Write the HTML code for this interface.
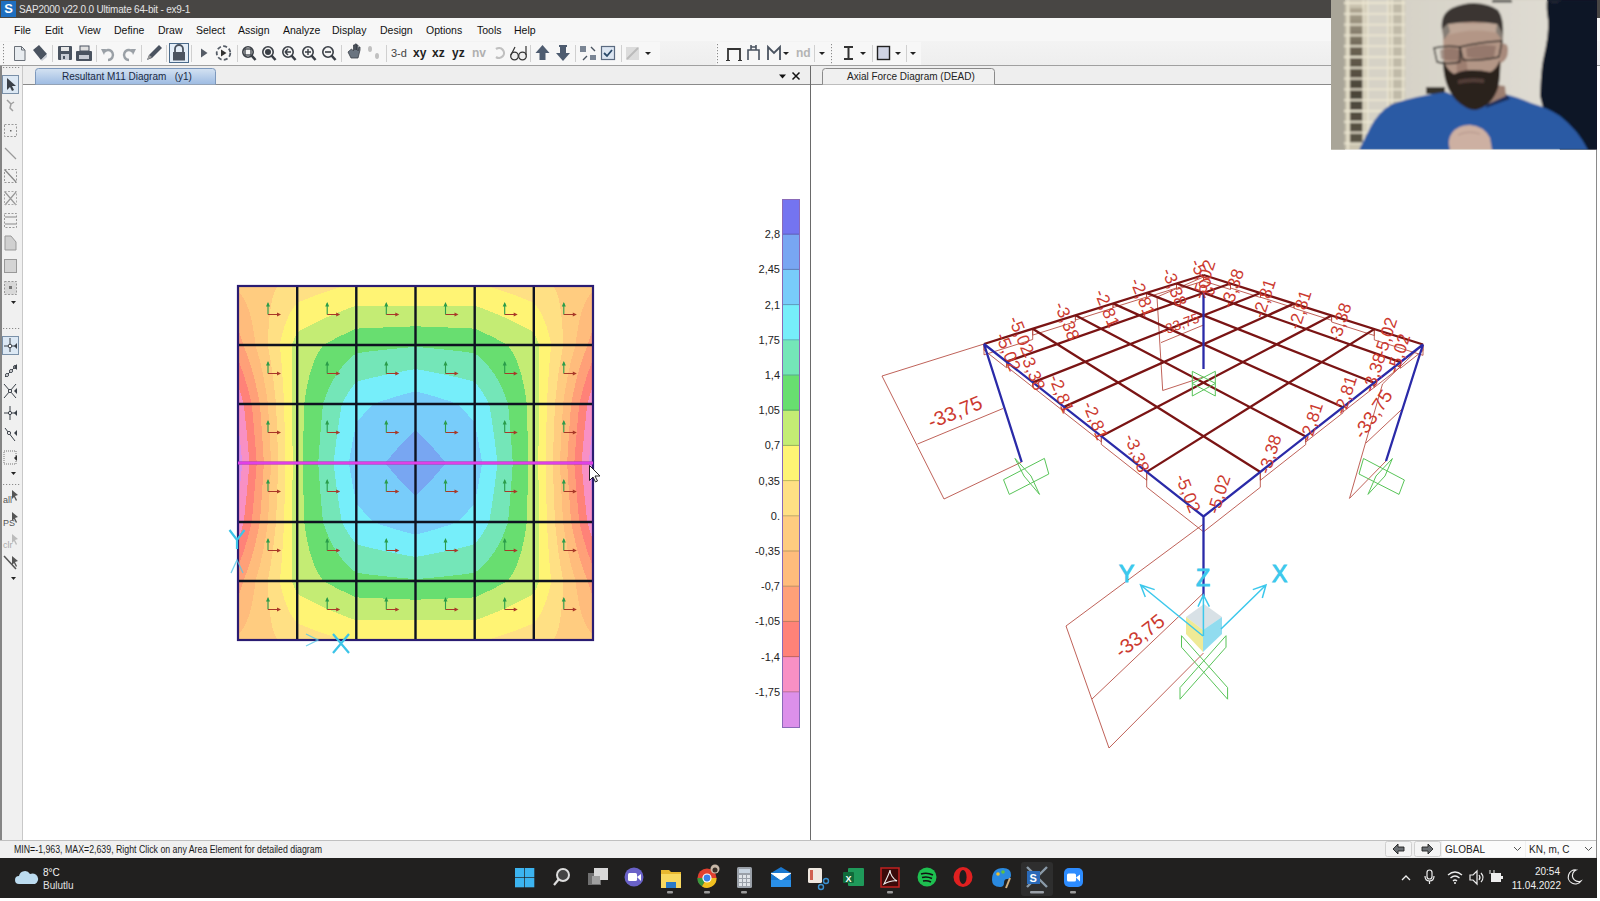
<!DOCTYPE html>
<html><head><meta charset="utf-8">
<style>
*{margin:0;padding:0;box-sizing:border-box}
html,body{width:1600px;height:901px;overflow:hidden;background:#fff;font-family:"Liberation Sans", sans-serif}
.a{position:absolute}
#title{left:0;top:0;width:1600px;height:18px;background:#484644;color:#e8e8e8}
#menu{left:0;top:18px;width:1600px;height:23px;background:#f7f7f7;font-size:10.5px;color:#111}
#menu span{position:absolute;top:6px}
#tbar{left:0;top:41px;width:1600px;height:25px;background:linear-gradient(#f3f3f3,#eeeeee);border-bottom:1px solid #a0a0a0}
#tabs{left:22px;top:66px;width:1575px;height:19px;background:#eeeeee;border-bottom:1px solid #8a8a8a}
#ltool{left:0;top:66px;width:23px;height:774px;background:#f0f0f0;border-left:2px solid #858585;border-right:1px solid #c8c8c8}
#divider{left:810px;top:66px;width:1px;height:774px;background:#6a6a6a}
#redge{left:1596px;top:66px;width:1px;height:792px;background:#8a8a8a}
#status{left:0;top:840px;width:1597px;height:18px;background:#f0f0f0;border-top:1px solid #c0c0c0;font-size:10px;color:#222}
#task{left:0;top:858px;width:1597px;height:39.5px;background:#21201f;color:#eee}
svg text{font-family:"Liberation Sans", sans-serif}
</style></head><body>
<div id="title" class="a">
  <div class="a" style="left:1px;top:1px;width:15px;height:16px;background:#1f6fc0;color:#fff;font-weight:bold;font-size:13px;text-align:center;line-height:16px">S</div>
  <div class="a" style="left:19px;top:4px;font-size:10px;letter-spacing:-0.2px;color:#e4e4e4">SAP2000 v22.0.0 Ultimate 64-bit - ex9-1</div>
</div>
<div id="menu" class="a">
  <span style="left:14px">File</span><span style="left:45px">Edit</span><span style="left:78px">View</span><span style="left:114px">Define</span><span style="left:158px">Draw</span><span style="left:196px">Select</span><span style="left:238px">Assign</span><span style="left:283px">Analyze</span><span style="left:332px">Display</span><span style="left:380px">Design</span><span style="left:426px">Options</span><span style="left:477px">Tools</span><span style="left:514px">Help</span>
</div>
<div id="tbar" class="a"></div>
<div id="tabs" class="a"></div>
<div id="ltool" class="a"></div>
<div id="divider" class="a"></div>
<div id="redge" class="a"></div>
<div id="status" class="a"></div>
<div id="task" class="a"></div>
<svg class="a" style="left:0;top:0" width="1600" height="901" viewBox="0 0 1600 901">
<g fill="none" shape-rendering="crispEdges"><path stroke="#dc90ea" stroke-width="1" d="M238 427.5h1M592 427.5h1M238 428.5h1M592 428.5h1M238 429.5h1M592 429.5h1M238 430.5h1M592 430.5h1M238 431.5h1M592 431.5h1M238 432.5h1M592 432.5h1M238 433.5h1M592 433.5h1M238 434.5h1M592 434.5h1M238 435.5h1M592 435.5h1M238 436.5h2M591 436.5h2M238 437.5h2M591 437.5h2M238 438.5h2M591 438.5h2M238 439.5h2M591 439.5h2M238 440.5h2M591 440.5h2M238 441.5h2M591 441.5h2M238 442.5h2M591 442.5h2M238 443.5h2M591 443.5h2M238 444.5h2M591 444.5h2M238 445.5h3M590 445.5h3M238 446.5h3M590 446.5h3M238 447.5h3M590 447.5h3M238 448.5h3M590 448.5h3M238 449.5h3M590 449.5h3M238 450.5h3M590 450.5h3M238 451.5h3M590 451.5h3M238 452.5h3M590 452.5h3M238 453.5h3M590 453.5h3M238 454.5h3M590 454.5h3M238 455.5h4M589 455.5h4M238 456.5h4M589 456.5h4M238 457.5h4M589 457.5h4M238 458.5h4M589 458.5h4M238 459.5h4M589 459.5h4M238 460.5h4M589 460.5h4M238 461.5h4M589 461.5h4M238 462.5h4M589 462.5h4M238 463.5h4M589 463.5h4M238 464.5h4M589 464.5h4M238 465.5h4M589 465.5h4M238 466.5h4M589 466.5h4M238 467.5h4M589 467.5h4M238 468.5h4M589 468.5h4M238 469.5h4M589 469.5h4M238 470.5h4M589 470.5h4M238 471.5h3M590 471.5h3M238 472.5h3M590 472.5h3M238 473.5h3M590 473.5h3M238 474.5h3M590 474.5h3M238 475.5h3M590 475.5h3M238 476.5h3M590 476.5h3M238 477.5h3M590 477.5h3M238 478.5h3M590 478.5h3M238 479.5h3M590 479.5h3M238 480.5h3M590 480.5h3M238 481.5h2M591 481.5h2M238 482.5h2M591 482.5h2M238 483.5h2M591 483.5h2M238 484.5h2M591 484.5h2M238 485.5h2M591 485.5h2M238 486.5h2M591 486.5h2M238 487.5h2M591 487.5h2M238 488.5h2M591 488.5h2M238 489.5h2M591 489.5h2M238 490.5h1M592 490.5h1M238 491.5h1M592 491.5h1M238 492.5h1M592 492.5h1M238 493.5h1M592 493.5h1M238 494.5h1M592 494.5h1M238 495.5h1M592 495.5h1M238 496.5h1M592 496.5h1M238 497.5h1M592 497.5h1M238 498.5h1M592 498.5h1"/><path stroke="#f890c4" stroke-width="1" d="M238 387.5h1M592 387.5h1M238 388.5h1M592 388.5h1M238 389.5h1M592 389.5h1M238 390.5h2M591 390.5h2M238 391.5h2M591 391.5h2M238 392.5h2M591 392.5h2M238 393.5h3M590 393.5h3M238 394.5h3M590 394.5h3M238 395.5h3M590 395.5h3M238 396.5h4M589 396.5h4M238 397.5h4M589 397.5h4M238 398.5h4M589 398.5h4M238 399.5h4M589 399.5h4M238 400.5h5M588 400.5h5M238 401.5h5M588 401.5h5M238 402.5h5M588 402.5h5M238 403.5h6M587 403.5h6M238 404.5h6M587 404.5h6M238 405.5h6M587 405.5h6M238 406.5h6M587 406.5h6M238 407.5h6M587 407.5h6M238 408.5h6M587 408.5h6M238 409.5h6M587 409.5h6M238 410.5h6M587 410.5h6M238 411.5h7M586 411.5h7M238 412.5h7M586 412.5h7M238 413.5h7M586 413.5h7M238 414.5h7M586 414.5h7M238 415.5h7M586 415.5h7M238 416.5h7M586 416.5h7M238 417.5h7M586 417.5h7M238 418.5h7M586 418.5h7M238 419.5h7M586 419.5h7M238 420.5h7M586 420.5h7M238 421.5h8M585 421.5h8M238 422.5h8M585 422.5h8M238 423.5h8M585 423.5h8M238 424.5h8M585 424.5h8M238 425.5h8M585 425.5h8M238 426.5h8M585 426.5h8M239 427.5h7M585 427.5h7M239 428.5h7M585 428.5h7M239 429.5h7M585 429.5h7M239 430.5h8M584 430.5h8M239 431.5h8M584 431.5h8M239 432.5h8M584 432.5h8M239 433.5h8M584 433.5h8M239 434.5h8M584 434.5h8M239 435.5h8M584 435.5h8M240 436.5h7M584 436.5h7M240 437.5h7M584 437.5h7M240 438.5h7M584 438.5h7M240 439.5h7M584 439.5h7M240 440.5h7M584 440.5h7M240 441.5h8M583 441.5h8M240 442.5h8M583 442.5h8M240 443.5h8M583 443.5h8M240 444.5h8M583 444.5h8M241 445.5h7M583 445.5h7M241 446.5h7M583 446.5h7M241 447.5h7M583 447.5h7M241 448.5h7M583 448.5h7M241 449.5h7M583 449.5h7M241 450.5h7M583 450.5h7M241 451.5h7M583 451.5h7M241 452.5h8M582 452.5h8M241 453.5h8M582 453.5h8M241 454.5h8M582 454.5h8M242 455.5h7M582 455.5h7M242 456.5h7M582 456.5h7M242 457.5h7M582 457.5h7M242 458.5h7M582 458.5h7M242 459.5h7M582 459.5h7M242 460.5h7M582 460.5h7M242 461.5h7M582 461.5h7M242 462.5h7M582 462.5h7M242 463.5h7M582 463.5h7M242 464.5h7M582 464.5h7M242 465.5h7M582 465.5h7M242 466.5h7M582 466.5h7M242 467.5h7M582 467.5h7M242 468.5h7M582 468.5h7M242 469.5h7M582 469.5h7M242 470.5h7M582 470.5h7M241 471.5h8M582 471.5h8M241 472.5h8M582 472.5h8M241 473.5h8M582 473.5h8M241 474.5h7M583 474.5h7M241 475.5h7M583 475.5h7M241 476.5h7M583 476.5h7M241 477.5h7M583 477.5h7M241 478.5h7M583 478.5h7M241 479.5h7M583 479.5h7M241 480.5h7M583 480.5h7M240 481.5h8M583 481.5h8M240 482.5h8M583 482.5h8M240 483.5h8M583 483.5h8M240 484.5h8M583 484.5h8M240 485.5h7M584 485.5h7M240 486.5h7M584 486.5h7M240 487.5h7M584 487.5h7M240 488.5h7M584 488.5h7M240 489.5h7M584 489.5h7M239 490.5h8M584 490.5h8M239 491.5h8M584 491.5h8M239 492.5h8M584 492.5h8M239 493.5h8M584 493.5h8M239 494.5h8M584 494.5h8M239 495.5h8M584 495.5h8M239 496.5h7M585 496.5h7M239 497.5h7M585 497.5h7M239 498.5h7M585 498.5h7M238 499.5h8M585 499.5h8M238 500.5h8M585 500.5h8M238 501.5h8M585 501.5h8M238 502.5h8M585 502.5h8M238 503.5h8M585 503.5h8M238 504.5h8M585 504.5h8M238 505.5h7M586 505.5h7M238 506.5h7M586 506.5h7M238 507.5h7M586 507.5h7M238 508.5h7M586 508.5h7M238 509.5h7M586 509.5h7M238 510.5h7M586 510.5h7M238 511.5h7M586 511.5h7M238 512.5h7M586 512.5h7M238 513.5h7M586 513.5h7M238 514.5h7M586 514.5h7M238 515.5h6M587 515.5h6M238 516.5h6M587 516.5h6M238 517.5h6M587 517.5h6M238 518.5h6M587 518.5h6M238 519.5h6M587 519.5h6M238 520.5h6M587 520.5h6M238 521.5h6M587 521.5h6M238 522.5h6M587 522.5h6M238 523.5h5M588 523.5h5M238 524.5h5M588 524.5h5M238 525.5h5M588 525.5h5M238 526.5h4M589 526.5h4M238 527.5h4M589 527.5h4M238 528.5h4M589 528.5h4M238 529.5h4M589 529.5h4M238 530.5h3M590 530.5h3M238 531.5h3M590 531.5h3M238 532.5h3M590 532.5h3M238 533.5h2M591 533.5h2M238 534.5h2M591 534.5h2M238 535.5h2M591 535.5h2M238 536.5h1M592 536.5h1M238 537.5h1M592 537.5h1M238 538.5h1M592 538.5h1"/><path stroke="#ff8278" stroke-width="1" d="M238 361.5h1M592 361.5h1M238 362.5h1M592 362.5h1M238 363.5h2M591 363.5h2M238 364.5h2M591 364.5h2M238 365.5h2M591 365.5h2M238 366.5h3M590 366.5h3M238 367.5h3M590 367.5h3M238 368.5h3M590 368.5h3M238 369.5h4M589 369.5h4M238 370.5h4M589 370.5h4M238 371.5h5M588 371.5h5M238 372.5h5M588 372.5h5M238 373.5h5M588 373.5h5M238 374.5h6M587 374.5h6M238 375.5h6M587 375.5h6M238 376.5h6M587 376.5h6M238 377.5h7M586 377.5h7M238 378.5h7M586 378.5h7M238 379.5h7M586 379.5h7M238 380.5h7M586 380.5h7M238 381.5h8M585 381.5h8M238 382.5h8M585 382.5h8M238 383.5h8M585 383.5h8M238 384.5h9M584 384.5h9M238 385.5h9M584 385.5h9M238 386.5h9M584 386.5h9M239 387.5h9M583 387.5h9M239 388.5h9M583 388.5h9M239 389.5h9M583 389.5h9M240 390.5h8M583 390.5h8M240 391.5h9M582 391.5h9M240 392.5h9M582 392.5h9M241 393.5h8M582 393.5h8M241 394.5h8M582 394.5h8M241 395.5h9M581 395.5h9M242 396.5h8M581 396.5h8M242 397.5h8M581 397.5h8M242 398.5h8M581 398.5h8M242 399.5h9M580 399.5h9M243 400.5h8M580 400.5h8M243 401.5h8M580 401.5h8M243 402.5h8M580 402.5h8M244 403.5h8M579 403.5h8M244 404.5h8M579 404.5h8M244 405.5h8M579 405.5h8M244 406.5h8M579 406.5h8M244 407.5h8M579 407.5h8M244 408.5h8M579 408.5h8M244 409.5h8M579 409.5h8M244 410.5h8M579 410.5h8M245 411.5h7M579 411.5h7M245 412.5h8M578 412.5h8M245 413.5h8M578 413.5h8M245 414.5h8M578 414.5h8M245 415.5h8M578 415.5h8M245 416.5h8M578 416.5h8M245 417.5h8M578 417.5h8M245 418.5h8M578 418.5h8M245 419.5h8M578 419.5h8M245 420.5h8M578 420.5h8M246 421.5h7M578 421.5h7M246 422.5h7M578 422.5h7M246 423.5h8M577 423.5h8M246 424.5h8M577 424.5h8M246 425.5h8M577 425.5h8M246 426.5h8M577 426.5h8M246 427.5h8M577 427.5h8M246 428.5h8M577 428.5h8M246 429.5h8M577 429.5h8M247 430.5h7M577 430.5h7M247 431.5h7M577 431.5h7M247 432.5h7M577 432.5h7M247 433.5h7M577 433.5h7M247 434.5h7M577 434.5h7M247 435.5h8M576 435.5h8M247 436.5h8M576 436.5h8M247 437.5h8M576 437.5h8M247 438.5h8M576 438.5h8M247 439.5h8M576 439.5h8M247 440.5h8M576 440.5h8M248 441.5h7M576 441.5h7M248 442.5h7M576 442.5h7M248 443.5h7M576 443.5h7M248 444.5h7M576 444.5h7M248 445.5h7M576 445.5h7M248 446.5h7M576 446.5h7M248 447.5h8M575 447.5h8M248 448.5h8M575 448.5h8M248 449.5h8M575 449.5h8M248 450.5h8M575 450.5h8M248 451.5h8M575 451.5h8M249 452.5h7M575 452.5h7M249 453.5h7M575 453.5h7M249 454.5h7M575 454.5h7M249 455.5h7M575 455.5h7M249 456.5h7M575 456.5h7M249 457.5h7M575 457.5h7M249 458.5h7M575 458.5h7M249 459.5h7M575 459.5h7M249 460.5h8M574 460.5h8M249 461.5h8M574 461.5h8M249 462.5h8M574 462.5h8M249 463.5h8M574 463.5h8M249 464.5h8M574 464.5h8M249 465.5h8M574 465.5h8M249 466.5h7M575 466.5h7M249 467.5h7M575 467.5h7M249 468.5h7M575 468.5h7M249 469.5h7M575 469.5h7M249 470.5h7M575 470.5h7M249 471.5h7M575 471.5h7M249 472.5h7M575 472.5h7M249 473.5h7M575 473.5h7M248 474.5h8M575 474.5h8M248 475.5h8M575 475.5h8M248 476.5h8M575 476.5h8M248 477.5h8M575 477.5h8M248 478.5h8M575 478.5h8M248 479.5h7M576 479.5h7M248 480.5h7M576 480.5h7M248 481.5h7M576 481.5h7M248 482.5h7M576 482.5h7M248 483.5h7M576 483.5h7M248 484.5h7M576 484.5h7M247 485.5h8M576 485.5h8M247 486.5h8M576 486.5h8M247 487.5h8M576 487.5h8M247 488.5h8M576 488.5h8M247 489.5h8M576 489.5h8M247 490.5h8M576 490.5h8M247 491.5h7M577 491.5h7M247 492.5h7M577 492.5h7M247 493.5h7M577 493.5h7M247 494.5h7M577 494.5h7M247 495.5h7M577 495.5h7M246 496.5h8M577 496.5h8M246 497.5h8M577 497.5h8M246 498.5h8M577 498.5h8M246 499.5h8M577 499.5h8M246 500.5h8M577 500.5h8M246 501.5h8M577 501.5h8M246 502.5h8M577 502.5h8M246 503.5h7M578 503.5h7M246 504.5h7M578 504.5h7M245 505.5h8M578 505.5h8M245 506.5h8M578 506.5h8M245 507.5h8M578 507.5h8M245 508.5h8M578 508.5h8M245 509.5h8M578 509.5h8M245 510.5h8M578 510.5h8M245 511.5h8M578 511.5h8M245 512.5h8M578 512.5h8M245 513.5h8M578 513.5h8M245 514.5h7M579 514.5h7M244 515.5h8M579 515.5h8M244 516.5h8M579 516.5h8M244 517.5h8M579 517.5h8M244 518.5h8M579 518.5h8M244 519.5h8M579 519.5h8M244 520.5h8M579 520.5h8M244 521.5h8M579 521.5h8M244 522.5h8M579 522.5h8M243 523.5h8M580 523.5h8M243 524.5h8M580 524.5h8M243 525.5h8M580 525.5h8M242 526.5h9M580 526.5h9M242 527.5h8M581 527.5h8M242 528.5h8M581 528.5h8M242 529.5h8M581 529.5h8M241 530.5h9M581 530.5h9M241 531.5h8M582 531.5h8M241 532.5h8M582 532.5h8M240 533.5h9M582 533.5h9M240 534.5h9M582 534.5h9M240 535.5h8M583 535.5h8M239 536.5h9M583 536.5h9M239 537.5h9M583 537.5h9M239 538.5h9M583 538.5h9M238 539.5h9M584 539.5h9M238 540.5h9M584 540.5h9M238 541.5h9M584 541.5h9M238 542.5h8M585 542.5h8M238 543.5h8M585 543.5h8M238 544.5h8M585 544.5h8M238 545.5h7M586 545.5h7M238 546.5h7M586 546.5h7M238 547.5h7M586 547.5h7M238 548.5h7M586 548.5h7M238 549.5h6M587 549.5h6M238 550.5h6M587 550.5h6M238 551.5h6M587 551.5h6M238 552.5h5M588 552.5h5M238 553.5h5M588 553.5h5M238 554.5h5M588 554.5h5M238 555.5h4M589 555.5h4M238 556.5h4M589 556.5h4M238 557.5h3M590 557.5h3M238 558.5h3M590 558.5h3M238 559.5h3M590 559.5h3M238 560.5h2M591 560.5h2M238 561.5h2M591 561.5h2M238 562.5h2M591 562.5h2M238 563.5h1M592 563.5h1M238 564.5h1M592 564.5h1"/><path stroke="#ffa078" stroke-width="1" d="M238 330.5h1M592 330.5h1M238 331.5h1M592 331.5h1M238 332.5h1M592 332.5h1M238 333.5h2M591 333.5h2M238 334.5h2M591 334.5h2M238 335.5h2M591 335.5h2M238 336.5h3M590 336.5h3M238 337.5h3M590 337.5h3M238 338.5h3M590 338.5h3M238 339.5h4M589 339.5h4M238 340.5h4M589 340.5h4M238 341.5h4M589 341.5h4M238 342.5h5M588 342.5h5M238 343.5h5M588 343.5h5M238 344.5h5M588 344.5h5M238 345.5h5M588 345.5h5M238 346.5h6M587 346.5h6M238 347.5h6M587 347.5h6M238 348.5h7M586 348.5h7M238 349.5h7M586 349.5h7M238 350.5h7M586 350.5h7M238 351.5h8M585 351.5h8M238 352.5h8M585 352.5h8M238 353.5h9M584 353.5h9M238 354.5h9M584 354.5h9M238 355.5h9M584 355.5h9M238 356.5h10M583 356.5h10M238 357.5h10M583 357.5h10M238 358.5h10M583 358.5h10M238 359.5h11M582 359.5h11M238 360.5h11M582 360.5h11M239 361.5h10M582 361.5h10M239 362.5h11M581 362.5h11M240 363.5h10M581 363.5h10M240 364.5h10M581 364.5h10M240 365.5h11M580 365.5h11M241 366.5h10M580 366.5h10M241 367.5h10M580 367.5h10M241 368.5h11M579 368.5h11M242 369.5h10M579 369.5h10M242 370.5h10M579 370.5h10M243 371.5h9M579 371.5h9M243 372.5h10M578 372.5h10M243 373.5h10M578 373.5h10M244 374.5h9M578 374.5h9M244 375.5h10M577 375.5h10M244 376.5h10M577 376.5h10M245 377.5h9M577 377.5h9M245 378.5h9M577 378.5h9M245 379.5h10M576 379.5h10M245 380.5h10M576 380.5h10M246 381.5h9M576 381.5h9M246 382.5h9M576 382.5h9M246 383.5h10M575 383.5h10M247 384.5h9M575 384.5h9M247 385.5h9M575 385.5h9M247 386.5h9M575 386.5h9M248 387.5h8M575 387.5h8M248 388.5h9M574 388.5h9M248 389.5h9M574 389.5h9M248 390.5h9M574 390.5h9M249 391.5h8M574 391.5h8M249 392.5h9M573 392.5h9M249 393.5h9M573 393.5h9M249 394.5h9M573 394.5h9M250 395.5h8M573 395.5h8M250 396.5h8M573 396.5h8M250 397.5h9M572 397.5h9M250 398.5h9M572 398.5h9M251 399.5h8M572 399.5h8M251 400.5h8M572 400.5h8M251 401.5h8M572 401.5h8M251 402.5h9M571 402.5h9M252 403.5h8M571 403.5h8M252 404.5h8M571 404.5h8M252 405.5h8M571 405.5h8M252 406.5h8M571 406.5h8M252 407.5h8M571 407.5h8M252 408.5h8M571 408.5h8M252 409.5h8M571 409.5h8M252 410.5h8M571 410.5h8M252 411.5h8M571 411.5h8M253 412.5h8M570 412.5h8M253 413.5h8M570 413.5h8M253 414.5h8M570 414.5h8M253 415.5h8M570 415.5h8M253 416.5h8M570 416.5h8M253 417.5h8M570 417.5h8M253 418.5h8M570 418.5h8M253 419.5h8M570 419.5h8M253 420.5h8M570 420.5h8M253 421.5h8M570 421.5h8M253 422.5h8M570 422.5h8M254 423.5h7M570 423.5h7M254 424.5h7M570 424.5h7M254 425.5h7M570 425.5h7M254 426.5h8M569 426.5h8M254 427.5h8M569 427.5h8M254 428.5h8M569 428.5h8M254 429.5h8M569 429.5h8M254 430.5h8M569 430.5h8M254 431.5h8M569 431.5h8M254 432.5h8M569 432.5h8M254 433.5h8M569 433.5h8M254 434.5h8M569 434.5h8M255 435.5h7M569 435.5h7M255 436.5h7M569 436.5h7M255 437.5h7M569 437.5h7M255 438.5h7M569 438.5h7M255 439.5h7M569 439.5h7M255 440.5h7M569 440.5h7M255 441.5h8M568 441.5h8M255 442.5h8M568 442.5h8M255 443.5h8M568 443.5h8M255 444.5h8M568 444.5h8M255 445.5h8M568 445.5h8M255 446.5h8M568 446.5h8M256 447.5h7M568 447.5h7M256 448.5h7M568 448.5h7M256 449.5h7M568 449.5h7M256 450.5h7M568 450.5h7M256 451.5h7M568 451.5h7M256 452.5h7M568 452.5h7M256 453.5h7M568 453.5h7M256 454.5h7M568 454.5h7M256 455.5h7M568 455.5h7M256 456.5h7M568 456.5h7M256 457.5h8M567 457.5h8M256 458.5h8M567 458.5h8M256 459.5h8M567 459.5h8M257 460.5h7M567 460.5h7M257 461.5h7M567 461.5h7M257 462.5h7M567 462.5h7M257 463.5h7M567 463.5h7M257 464.5h7M567 464.5h7M257 465.5h7M567 465.5h7M256 466.5h8M567 466.5h8M256 467.5h8M567 467.5h8M256 468.5h8M567 468.5h8M256 469.5h7M568 469.5h7M256 470.5h7M568 470.5h7M256 471.5h7M568 471.5h7M256 472.5h7M568 472.5h7M256 473.5h7M568 473.5h7M256 474.5h7M568 474.5h7M256 475.5h7M568 475.5h7M256 476.5h7M568 476.5h7M256 477.5h7M568 477.5h7M256 478.5h7M568 478.5h7M255 479.5h8M568 479.5h8M255 480.5h8M568 480.5h8M255 481.5h8M568 481.5h8M255 482.5h8M568 482.5h8M255 483.5h8M568 483.5h8M255 484.5h8M568 484.5h8M255 485.5h7M569 485.5h7M255 486.5h7M569 486.5h7M255 487.5h7M569 487.5h7M255 488.5h7M569 488.5h7M255 489.5h7M569 489.5h7M255 490.5h7M569 490.5h7M254 491.5h8M569 491.5h8M254 492.5h8M569 492.5h8M254 493.5h8M569 493.5h8M254 494.5h8M569 494.5h8M254 495.5h8M569 495.5h8M254 496.5h8M569 496.5h8M254 497.5h8M569 497.5h8M254 498.5h8M569 498.5h8M254 499.5h8M569 499.5h8M254 500.5h7M570 500.5h7M254 501.5h7M570 501.5h7M254 502.5h7M570 502.5h7M253 503.5h8M570 503.5h8M253 504.5h8M570 504.5h8M253 505.5h8M570 505.5h8M253 506.5h8M570 506.5h8M253 507.5h8M570 507.5h8M253 508.5h8M570 508.5h8M253 509.5h8M570 509.5h8M253 510.5h8M570 510.5h8M253 511.5h8M570 511.5h8M253 512.5h8M570 512.5h8M253 513.5h8M570 513.5h8M252 514.5h8M571 514.5h8M252 515.5h8M571 515.5h8M252 516.5h8M571 516.5h8M252 517.5h8M571 517.5h8M252 518.5h8M571 518.5h8M252 519.5h8M571 519.5h8M252 520.5h8M571 520.5h8M252 521.5h8M571 521.5h8M252 522.5h8M571 522.5h8M251 523.5h9M571 523.5h9M251 524.5h8M572 524.5h8M251 525.5h8M572 525.5h8M251 526.5h8M572 526.5h8M250 527.5h9M572 527.5h9M250 528.5h9M572 528.5h9M250 529.5h8M573 529.5h8M250 530.5h8M573 530.5h8M249 531.5h9M573 531.5h9M249 532.5h9M573 532.5h9M249 533.5h9M573 533.5h9M249 534.5h8M574 534.5h8M248 535.5h9M574 535.5h9M248 536.5h9M574 536.5h9M248 537.5h9M574 537.5h9M248 538.5h8M575 538.5h8M247 539.5h9M575 539.5h9M247 540.5h9M575 540.5h9M247 541.5h9M575 541.5h9M246 542.5h10M575 542.5h10M246 543.5h9M576 543.5h9M246 544.5h9M576 544.5h9M245 545.5h10M576 545.5h10M245 546.5h10M576 546.5h10M245 547.5h9M577 547.5h9M245 548.5h9M577 548.5h9M244 549.5h10M577 549.5h10M244 550.5h10M577 550.5h10M244 551.5h9M578 551.5h9M243 552.5h10M578 552.5h10M243 553.5h10M578 553.5h10M243 554.5h9M579 554.5h9M242 555.5h10M579 555.5h10M242 556.5h10M579 556.5h10M241 557.5h11M579 557.5h11M241 558.5h10M580 558.5h10M241 559.5h10M580 559.5h10M240 560.5h11M580 560.5h11M240 561.5h10M581 561.5h10M240 562.5h10M581 562.5h10M239 563.5h11M581 563.5h11M239 564.5h10M582 564.5h10M238 565.5h11M582 565.5h11M238 566.5h11M582 566.5h11M238 567.5h10M583 567.5h10M238 568.5h10M583 568.5h10M238 569.5h10M583 569.5h10M238 570.5h9M584 570.5h9M238 571.5h9M584 571.5h9M238 572.5h9M584 572.5h9M238 573.5h8M585 573.5h8M238 574.5h8M585 574.5h8M238 575.5h7M586 575.5h7M238 576.5h7M586 576.5h7M238 577.5h7M586 577.5h7M238 578.5h6M587 578.5h6M238 579.5h6M587 579.5h6M238 580.5h5M588 580.5h5M238 581.5h5M588 581.5h5M238 582.5h5M588 582.5h5M238 583.5h5M588 583.5h5M238 584.5h4M589 584.5h4M238 585.5h4M589 585.5h4M238 586.5h4M589 586.5h4M238 587.5h3M590 587.5h3M238 588.5h3M590 588.5h3M238 589.5h3M590 589.5h3M238 590.5h2M591 590.5h2M238 591.5h2M591 591.5h2M238 592.5h2M591 592.5h2M238 593.5h1M592 593.5h1M238 594.5h1M592 594.5h1M238 595.5h1M592 595.5h1"/><path stroke="#ffbc7c" stroke-width="1" d="M238 292.5h1M592 292.5h1M238 293.5h2M591 293.5h2M238 294.5h3M590 294.5h3M238 295.5h4M589 295.5h4M238 296.5h4M589 296.5h4M238 297.5h5M588 297.5h5M238 298.5h6M587 298.5h6M238 299.5h6M587 299.5h6M238 300.5h7M586 300.5h7M238 301.5h7M586 301.5h7M238 302.5h8M585 302.5h8M238 303.5h8M585 303.5h8M238 304.5h9M584 304.5h9M238 305.5h9M584 305.5h9M238 306.5h9M584 306.5h9M238 307.5h10M583 307.5h10M238 308.5h10M583 308.5h10M238 309.5h11M582 309.5h11M238 310.5h11M582 310.5h11M238 311.5h11M582 311.5h11M238 312.5h12M581 312.5h12M238 313.5h12M581 313.5h12M238 314.5h12M581 314.5h12M238 315.5h12M581 315.5h12M238 316.5h13M580 316.5h13M238 317.5h13M580 317.5h13M238 318.5h13M580 318.5h13M238 319.5h13M580 319.5h13M238 320.5h14M579 320.5h14M238 321.5h14M579 321.5h14M238 322.5h14M579 322.5h14M238 323.5h14M579 323.5h14M238 324.5h14M579 324.5h14M238 325.5h15M578 325.5h15M238 326.5h15M578 326.5h15M238 327.5h15M578 327.5h15M238 328.5h15M578 328.5h15M238 329.5h15M578 329.5h15M239 330.5h14M578 330.5h14M239 331.5h15M577 331.5h15M239 332.5h15M577 332.5h15M240 333.5h14M577 333.5h14M240 334.5h14M577 334.5h14M240 335.5h14M577 335.5h14M241 336.5h13M577 336.5h13M241 337.5h14M576 337.5h14M241 338.5h14M576 338.5h14M242 339.5h13M576 339.5h13M242 340.5h13M576 340.5h13M242 341.5h13M576 341.5h13M243 342.5h12M576 342.5h12M243 343.5h12M576 343.5h12M243 344.5h12M576 344.5h12M243 345.5h13M575 345.5h13M244 346.5h12M575 346.5h12M244 347.5h12M575 347.5h12M245 348.5h11M575 348.5h11M245 349.5h12M574 349.5h12M245 350.5h12M574 350.5h12M246 351.5h11M574 351.5h11M246 352.5h12M573 352.5h12M247 353.5h11M573 353.5h11M247 354.5h11M573 354.5h11M247 355.5h11M573 355.5h11M248 356.5h11M572 356.5h11M248 357.5h11M572 357.5h11M248 358.5h11M572 358.5h11M249 359.5h11M571 359.5h11M249 360.5h11M571 360.5h11M249 361.5h11M571 361.5h11M250 362.5h10M571 362.5h10M250 363.5h11M570 363.5h11M250 364.5h11M570 364.5h11M251 365.5h10M570 365.5h10M251 366.5h10M570 366.5h10M251 367.5h10M570 367.5h10M252 368.5h10M569 368.5h10M252 369.5h10M569 369.5h10M252 370.5h10M569 370.5h10M252 371.5h10M569 371.5h10M253 372.5h10M568 372.5h10M253 373.5h10M568 373.5h10M253 374.5h10M568 374.5h10M254 375.5h9M568 375.5h9M254 376.5h9M568 376.5h9M254 377.5h10M567 377.5h10M254 378.5h10M567 378.5h10M255 379.5h9M567 379.5h9M255 380.5h9M567 380.5h9M255 381.5h9M567 381.5h9M255 382.5h9M567 382.5h9M256 383.5h9M566 383.5h9M256 384.5h9M566 384.5h9M256 385.5h9M566 385.5h9M256 386.5h9M566 386.5h9M256 387.5h9M566 387.5h9M257 388.5h9M565 388.5h9M257 389.5h9M565 389.5h9M257 390.5h9M565 390.5h9M257 391.5h9M565 391.5h9M258 392.5h8M565 392.5h8M258 393.5h8M565 393.5h8M258 394.5h9M564 394.5h9M258 395.5h9M564 395.5h9M258 396.5h9M564 396.5h9M259 397.5h8M564 397.5h8M259 398.5h8M564 398.5h8M259 399.5h8M564 399.5h8M259 400.5h8M564 400.5h8M259 401.5h9M563 401.5h9M260 402.5h8M563 402.5h8M260 403.5h8M563 403.5h8M260 404.5h8M563 404.5h8M260 405.5h8M563 405.5h8M260 406.5h8M563 406.5h8M260 407.5h8M563 407.5h8M260 408.5h8M563 408.5h8M260 409.5h8M563 409.5h8M260 410.5h8M563 410.5h8M260 411.5h8M563 411.5h8M261 412.5h7M563 412.5h7M261 413.5h7M563 413.5h7M261 414.5h8M562 414.5h8M261 415.5h8M562 415.5h8M261 416.5h8M562 416.5h8M261 417.5h8M562 417.5h8M261 418.5h8M562 418.5h8M261 419.5h8M562 419.5h8M261 420.5h8M562 420.5h8M261 421.5h8M562 421.5h8M261 422.5h8M562 422.5h8M261 423.5h8M562 423.5h8M261 424.5h8M562 424.5h8M261 425.5h8M562 425.5h8M262 426.5h7M562 426.5h7M262 427.5h7M562 427.5h7M262 428.5h7M562 428.5h7M262 429.5h7M562 429.5h7M262 430.5h7M562 430.5h7M262 431.5h7M562 431.5h7M262 432.5h8M561 432.5h8M262 433.5h8M561 433.5h8M262 434.5h8M561 434.5h8M262 435.5h8M561 435.5h8M262 436.5h8M561 436.5h8M262 437.5h8M561 437.5h8M262 438.5h8M561 438.5h8M262 439.5h8M561 439.5h8M262 440.5h8M561 440.5h8M263 441.5h7M561 441.5h7M263 442.5h7M561 442.5h7M263 443.5h7M561 443.5h7M263 444.5h7M561 444.5h7M263 445.5h7M561 445.5h7M263 446.5h7M561 446.5h7M263 447.5h7M561 447.5h7M263 448.5h7M561 448.5h7M263 449.5h7M561 449.5h7M263 450.5h7M561 450.5h7M263 451.5h8M560 451.5h8M263 452.5h8M560 452.5h8M263 453.5h8M560 453.5h8M263 454.5h8M560 454.5h8M263 455.5h8M560 455.5h8M263 456.5h8M560 456.5h8M264 457.5h7M560 457.5h7M264 458.5h7M560 458.5h7M264 459.5h7M560 459.5h7M264 460.5h7M560 460.5h7M264 461.5h7M560 461.5h7M264 462.5h7M560 462.5h7M264 463.5h7M560 463.5h7M264 464.5h7M560 464.5h7M264 465.5h7M560 465.5h7M264 466.5h7M560 466.5h7M264 467.5h7M560 467.5h7M264 468.5h7M560 468.5h7M263 469.5h8M560 469.5h8M263 470.5h8M560 470.5h8M263 471.5h8M560 471.5h8M263 472.5h8M560 472.5h8M263 473.5h8M560 473.5h8M263 474.5h8M560 474.5h8M263 475.5h7M561 475.5h7M263 476.5h7M561 476.5h7M263 477.5h7M561 477.5h7M263 478.5h7M561 478.5h7M263 479.5h7M561 479.5h7M263 480.5h7M561 480.5h7M263 481.5h7M561 481.5h7M263 482.5h7M561 482.5h7M263 483.5h7M561 483.5h7M263 484.5h7M561 484.5h7M262 485.5h8M561 485.5h8M262 486.5h8M561 486.5h8M262 487.5h8M561 487.5h8M262 488.5h8M561 488.5h8M262 489.5h8M561 489.5h8M262 490.5h8M561 490.5h8M262 491.5h8M561 491.5h8M262 492.5h8M561 492.5h8M262 493.5h8M561 493.5h8M262 494.5h7M562 494.5h7M262 495.5h7M562 495.5h7M262 496.5h7M562 496.5h7M262 497.5h7M562 497.5h7M262 498.5h7M562 498.5h7M262 499.5h7M562 499.5h7M261 500.5h8M562 500.5h8M261 501.5h8M562 501.5h8M261 502.5h8M562 502.5h8M261 503.5h8M562 503.5h8M261 504.5h8M562 504.5h8M261 505.5h8M562 505.5h8M261 506.5h8M562 506.5h8M261 507.5h8M562 507.5h8M261 508.5h8M562 508.5h8M261 509.5h8M562 509.5h8M261 510.5h8M562 510.5h8M261 511.5h8M562 511.5h8M261 512.5h7M563 512.5h7M261 513.5h7M563 513.5h7M260 514.5h8M563 514.5h8M260 515.5h8M563 515.5h8M260 516.5h8M563 516.5h8M260 517.5h8M563 517.5h8M260 518.5h8M563 518.5h8M260 519.5h8M563 519.5h8M260 520.5h8M563 520.5h8M260 521.5h8M563 521.5h8M260 522.5h8M563 522.5h8M260 523.5h8M563 523.5h8M259 524.5h9M563 524.5h9M259 525.5h8M564 525.5h8M259 526.5h8M564 526.5h8M259 527.5h8M564 527.5h8M259 528.5h8M564 528.5h8M258 529.5h9M564 529.5h9M258 530.5h9M564 530.5h9M258 531.5h9M564 531.5h9M258 532.5h8M565 532.5h8M258 533.5h8M565 533.5h8M257 534.5h9M565 534.5h9M257 535.5h9M565 535.5h9M257 536.5h9M565 536.5h9M257 537.5h9M565 537.5h9M256 538.5h9M566 538.5h9M256 539.5h9M566 539.5h9M256 540.5h9M566 540.5h9M256 541.5h9M566 541.5h9M256 542.5h9M566 542.5h9M255 543.5h9M567 543.5h9M255 544.5h9M567 544.5h9M255 545.5h9M567 545.5h9M255 546.5h9M567 546.5h9M254 547.5h10M567 547.5h10M254 548.5h10M567 548.5h10M254 549.5h9M568 549.5h9M254 550.5h9M568 550.5h9M253 551.5h10M568 551.5h10M253 552.5h10M568 552.5h10M253 553.5h10M568 553.5h10M252 554.5h10M569 554.5h10M252 555.5h10M569 555.5h10M252 556.5h10M569 556.5h10M252 557.5h10M569 557.5h10M251 558.5h10M570 558.5h10M251 559.5h10M570 559.5h10M251 560.5h10M570 560.5h10M250 561.5h11M570 561.5h11M250 562.5h11M570 562.5h11M250 563.5h10M571 563.5h10M249 564.5h11M571 564.5h11M249 565.5h11M571 565.5h11M249 566.5h11M571 566.5h11M248 567.5h11M572 567.5h11M248 568.5h11M572 568.5h11M248 569.5h11M572 569.5h11M247 570.5h11M573 570.5h11M247 571.5h11M573 571.5h11M247 572.5h11M573 572.5h11M246 573.5h12M573 573.5h12M246 574.5h11M574 574.5h11M245 575.5h12M574 575.5h12M245 576.5h12M574 576.5h12M245 577.5h11M575 577.5h11M244 578.5h12M575 578.5h12M244 579.5h12M575 579.5h12M243 580.5h13M575 580.5h13M243 581.5h12M576 581.5h12M243 582.5h12M576 582.5h12M243 583.5h12M576 583.5h12M242 584.5h13M576 584.5h13M242 585.5h13M576 585.5h13M242 586.5h13M576 586.5h13M241 587.5h14M576 587.5h14M241 588.5h14M576 588.5h14M241 589.5h13M577 589.5h13M240 590.5h14M577 590.5h14M240 591.5h14M577 591.5h14M240 592.5h14M577 592.5h14M239 593.5h15M577 593.5h15M239 594.5h15M577 594.5h15M239 595.5h14M578 595.5h14M238 596.5h15M578 596.5h15M238 597.5h15M578 597.5h15M238 598.5h15M578 598.5h15M238 599.5h15M578 599.5h15M238 600.5h15M578 600.5h15M238 601.5h14M579 601.5h14M238 602.5h14M579 602.5h14M238 603.5h14M579 603.5h14M238 604.5h14M579 604.5h14M238 605.5h14M579 605.5h14M238 606.5h13M580 606.5h13M238 607.5h13M580 607.5h13M238 608.5h13M580 608.5h13M238 609.5h13M580 609.5h13M238 610.5h12M581 610.5h12M238 611.5h12M581 611.5h12M238 612.5h12M581 612.5h12M238 613.5h12M581 613.5h12M238 614.5h11M582 614.5h11M238 615.5h11M582 615.5h11M238 616.5h11M582 616.5h11M238 617.5h10M583 617.5h10M238 618.5h10M583 618.5h10M238 619.5h9M584 619.5h9M238 620.5h9M584 620.5h9M238 621.5h9M584 621.5h9M238 622.5h8M585 622.5h8M238 623.5h8M585 623.5h8M238 624.5h7M586 624.5h7M238 625.5h7M586 625.5h7M238 626.5h6M587 626.5h6M238 627.5h6M587 627.5h6M238 628.5h5M588 628.5h5M238 629.5h4M589 629.5h4M238 630.5h4M589 630.5h4M238 631.5h3M590 631.5h3M238 632.5h2M591 632.5h2M238 633.5h1M592 633.5h1"/><path stroke="#ffcc80" stroke-width="1" d="M238 286.5h39M554 286.5h39M238 287.5h39M554 287.5h39M238 288.5h38M555 288.5h38M238 289.5h38M555 289.5h38M238 290.5h37M556 290.5h37M238 291.5h37M556 291.5h37M239 292.5h35M557 292.5h35M240 293.5h34M557 293.5h34M241 294.5h33M557 294.5h33M242 295.5h31M558 295.5h31M242 296.5h31M558 296.5h31M243 297.5h30M558 297.5h30M244 298.5h28M559 298.5h28M244 299.5h28M559 299.5h28M245 300.5h27M559 300.5h27M245 301.5h27M559 301.5h27M246 302.5h26M559 302.5h26M246 303.5h25M560 303.5h25M247 304.5h24M560 304.5h24M247 305.5h24M560 305.5h24M247 306.5h24M560 306.5h24M248 307.5h23M560 307.5h23M248 308.5h23M560 308.5h23M249 309.5h21M561 309.5h21M249 310.5h21M561 310.5h21M249 311.5h21M561 311.5h21M250 312.5h20M561 312.5h20M250 313.5h20M561 313.5h20M250 314.5h20M561 314.5h20M250 315.5h20M561 315.5h20M251 316.5h19M561 316.5h19M251 317.5h18M562 317.5h18M251 318.5h18M562 318.5h18M251 319.5h18M562 319.5h18M252 320.5h17M562 320.5h17M252 321.5h17M562 321.5h17M252 322.5h17M562 322.5h17M252 323.5h17M562 323.5h17M252 324.5h17M562 324.5h17M253 325.5h16M562 325.5h16M253 326.5h16M562 326.5h16M253 327.5h16M562 327.5h16M253 328.5h16M562 328.5h16M253 329.5h15M563 329.5h15M253 330.5h15M563 330.5h15M254 331.5h14M563 331.5h14M254 332.5h14M563 332.5h14M254 333.5h14M563 333.5h14M254 334.5h14M563 334.5h14M254 335.5h14M563 335.5h14M254 336.5h14M563 336.5h14M255 337.5h13M563 337.5h13M255 338.5h13M563 338.5h13M255 339.5h13M563 339.5h13M255 340.5h13M563 340.5h13M255 341.5h13M563 341.5h13M255 342.5h13M563 342.5h13M255 343.5h13M563 343.5h13M255 344.5h13M563 344.5h13M256 345.5h12M563 345.5h12M256 346.5h12M563 346.5h12M256 347.5h12M563 347.5h12M256 348.5h12M563 348.5h12M257 349.5h12M562 349.5h12M257 350.5h12M562 350.5h12M257 351.5h12M562 351.5h12M258 352.5h11M562 352.5h11M258 353.5h11M562 353.5h11M258 354.5h11M562 354.5h11M258 355.5h12M561 355.5h12M259 356.5h11M561 356.5h11M259 357.5h11M561 357.5h11M259 358.5h11M561 358.5h11M260 359.5h10M561 359.5h10M260 360.5h11M560 360.5h11M260 361.5h11M560 361.5h11M260 362.5h11M560 362.5h11M261 363.5h10M560 363.5h10M261 364.5h10M560 364.5h10M261 365.5h10M560 365.5h10M261 366.5h10M560 366.5h10M261 367.5h11M559 367.5h11M262 368.5h10M559 368.5h10M262 369.5h10M559 369.5h10M262 370.5h10M559 370.5h10M262 371.5h10M559 371.5h10M263 372.5h9M559 372.5h9M263 373.5h10M558 373.5h10M263 374.5h10M558 374.5h10M263 375.5h10M558 375.5h10M263 376.5h10M558 376.5h10M264 377.5h9M558 377.5h9M264 378.5h9M558 378.5h9M264 379.5h9M558 379.5h9M264 380.5h9M558 380.5h9M264 381.5h10M557 381.5h10M264 382.5h10M557 382.5h10M265 383.5h9M557 383.5h9M265 384.5h9M557 384.5h9M265 385.5h9M557 385.5h9M265 386.5h9M557 386.5h9M265 387.5h9M557 387.5h9M266 388.5h8M557 388.5h8M266 389.5h8M557 389.5h8M266 390.5h9M556 390.5h9M266 391.5h9M556 391.5h9M266 392.5h9M556 392.5h9M266 393.5h9M556 393.5h9M267 394.5h8M556 394.5h8M267 395.5h8M556 395.5h8M267 396.5h8M556 396.5h8M267 397.5h8M556 397.5h8M267 398.5h8M556 398.5h8M267 399.5h9M555 399.5h9M267 400.5h9M555 400.5h9M268 401.5h8M555 401.5h8M268 402.5h8M555 402.5h8M268 403.5h8M555 403.5h8M268 404.5h8M555 404.5h8M268 405.5h8M555 405.5h8M268 406.5h8M555 406.5h8M268 407.5h8M555 407.5h8M268 408.5h8M555 408.5h8M268 409.5h8M555 409.5h8M268 410.5h8M555 410.5h8M268 411.5h8M555 411.5h8M268 412.5h8M555 412.5h8M268 413.5h8M555 413.5h8M269 414.5h7M555 414.5h7M269 415.5h7M555 415.5h7M269 416.5h8M554 416.5h8M269 417.5h8M554 417.5h8M269 418.5h8M554 418.5h8M269 419.5h8M554 419.5h8M269 420.5h8M554 420.5h8M269 421.5h8M554 421.5h8M269 422.5h8M554 422.5h8M269 423.5h8M554 423.5h8M269 424.5h8M554 424.5h8M269 425.5h8M554 425.5h8M269 426.5h8M554 426.5h8M269 427.5h8M554 427.5h8M269 428.5h8M554 428.5h8M269 429.5h8M554 429.5h8M269 430.5h8M554 430.5h8M269 431.5h8M554 431.5h8M270 432.5h7M554 432.5h7M270 433.5h7M554 433.5h7M270 434.5h7M554 434.5h7M270 435.5h7M554 435.5h7M270 436.5h7M554 436.5h7M270 437.5h7M554 437.5h7M270 438.5h7M554 438.5h7M270 439.5h7M554 439.5h7M270 440.5h7M554 440.5h7M270 441.5h7M554 441.5h7M270 442.5h8M553 442.5h8M270 443.5h8M553 443.5h8M270 444.5h8M553 444.5h8M270 445.5h8M553 445.5h8M270 446.5h8M553 446.5h8M270 447.5h8M553 447.5h8M270 448.5h8M553 448.5h8M270 449.5h8M553 449.5h8M270 450.5h8M553 450.5h8M271 451.5h7M553 451.5h7M271 452.5h7M553 452.5h7M271 453.5h7M553 453.5h7M271 454.5h7M553 454.5h7M271 455.5h7M553 455.5h7M271 456.5h7M553 456.5h7M271 457.5h7M553 457.5h7M271 458.5h7M553 458.5h7M271 459.5h7M553 459.5h7M271 460.5h7M553 460.5h7M271 461.5h7M553 461.5h7M271 462.5h7M553 462.5h7M271 463.5h7M553 463.5h7M271 464.5h7M553 464.5h7M271 465.5h7M553 465.5h7M271 466.5h7M553 466.5h7M271 467.5h7M553 467.5h7M271 468.5h7M553 468.5h7M271 469.5h7M553 469.5h7M271 470.5h7M553 470.5h7M271 471.5h7M553 471.5h7M271 472.5h7M553 472.5h7M271 473.5h7M553 473.5h7M271 474.5h7M553 474.5h7M270 475.5h8M553 475.5h8M270 476.5h8M553 476.5h8M270 477.5h8M553 477.5h8M270 478.5h8M553 478.5h8M270 479.5h8M553 479.5h8M270 480.5h8M553 480.5h8M270 481.5h8M553 481.5h8M270 482.5h8M553 482.5h8M270 483.5h8M553 483.5h8M270 484.5h7M554 484.5h7M270 485.5h7M554 485.5h7M270 486.5h7M554 486.5h7M270 487.5h7M554 487.5h7M270 488.5h7M554 488.5h7M270 489.5h7M554 489.5h7M270 490.5h7M554 490.5h7M270 491.5h7M554 491.5h7M270 492.5h7M554 492.5h7M270 493.5h7M554 493.5h7M269 494.5h8M554 494.5h8M269 495.5h8M554 495.5h8M269 496.5h8M554 496.5h8M269 497.5h8M554 497.5h8M269 498.5h8M554 498.5h8M269 499.5h8M554 499.5h8M269 500.5h8M554 500.5h8M269 501.5h8M554 501.5h8M269 502.5h8M554 502.5h8M269 503.5h8M554 503.5h8M269 504.5h8M554 504.5h8M269 505.5h8M554 505.5h8M269 506.5h8M554 506.5h8M269 507.5h8M554 507.5h8M269 508.5h8M554 508.5h8M269 509.5h8M554 509.5h8M269 510.5h7M555 510.5h7M269 511.5h7M555 511.5h7M268 512.5h8M555 512.5h8M268 513.5h8M555 513.5h8M268 514.5h8M555 514.5h8M268 515.5h8M555 515.5h8M268 516.5h8M555 516.5h8M268 517.5h8M555 517.5h8M268 518.5h8M555 518.5h8M268 519.5h8M555 519.5h8M268 520.5h8M555 520.5h8M268 521.5h8M555 521.5h8M268 522.5h8M555 522.5h8M268 523.5h8M555 523.5h8M268 524.5h8M555 524.5h8M267 525.5h9M555 525.5h9M267 526.5h9M555 526.5h9M267 527.5h8M556 527.5h8M267 528.5h8M556 528.5h8M267 529.5h8M556 529.5h8M267 530.5h8M556 530.5h8M267 531.5h8M556 531.5h8M266 532.5h9M556 532.5h9M266 533.5h9M556 533.5h9M266 534.5h9M556 534.5h9M266 535.5h9M556 535.5h9M266 536.5h8M557 536.5h8M266 537.5h8M557 537.5h8M265 538.5h9M557 538.5h9M265 539.5h9M557 539.5h9M265 540.5h9M557 540.5h9M265 541.5h9M557 541.5h9M265 542.5h9M557 542.5h9M264 543.5h10M557 543.5h10M264 544.5h10M557 544.5h10M264 545.5h9M558 545.5h9M264 546.5h9M558 546.5h9M264 547.5h9M558 547.5h9M264 548.5h9M558 548.5h9M263 549.5h10M558 549.5h10M263 550.5h10M558 550.5h10M263 551.5h10M558 551.5h10M263 552.5h10M558 552.5h10M263 553.5h9M559 553.5h9M262 554.5h10M559 554.5h10M262 555.5h10M559 555.5h10M262 556.5h10M559 556.5h10M262 557.5h10M559 557.5h10M261 558.5h11M559 558.5h11M261 559.5h10M560 559.5h10M261 560.5h10M560 560.5h10M261 561.5h10M560 561.5h10M261 562.5h10M560 562.5h10M260 563.5h11M560 563.5h11M260 564.5h11M560 564.5h11M260 565.5h11M560 565.5h11M260 566.5h10M561 566.5h10M259 567.5h11M561 567.5h11M259 568.5h11M561 568.5h11M259 569.5h11M561 569.5h11M258 570.5h12M561 570.5h12M258 571.5h11M562 571.5h11M258 572.5h11M562 572.5h11M258 573.5h11M562 573.5h11M257 574.5h12M562 574.5h12M257 575.5h12M562 575.5h12M257 576.5h12M562 576.5h12M256 577.5h12M563 577.5h12M256 578.5h12M563 578.5h12M256 579.5h12M563 579.5h12M256 580.5h12M563 580.5h12M255 581.5h13M563 581.5h13M255 582.5h13M563 582.5h13M255 583.5h13M563 583.5h13M255 584.5h13M563 584.5h13M255 585.5h13M563 585.5h13M255 586.5h13M563 586.5h13M255 587.5h13M563 587.5h13M255 588.5h13M563 588.5h13M254 589.5h14M563 589.5h14M254 590.5h14M563 590.5h14M254 591.5h14M563 591.5h14M254 592.5h14M563 592.5h14M254 593.5h14M563 593.5h14M254 594.5h14M563 594.5h14M253 595.5h15M563 595.5h15M253 596.5h15M563 596.5h15M253 597.5h16M562 597.5h16M253 598.5h16M562 598.5h16M253 599.5h16M562 599.5h16M253 600.5h16M562 600.5h16M252 601.5h17M562 601.5h17M252 602.5h17M562 602.5h17M252 603.5h17M562 603.5h17M252 604.5h17M562 604.5h17M252 605.5h17M562 605.5h17M251 606.5h18M562 606.5h18M251 607.5h18M562 607.5h18M251 608.5h18M562 608.5h18M251 609.5h19M561 609.5h19M250 610.5h20M561 610.5h20M250 611.5h20M561 611.5h20M250 612.5h20M561 612.5h20M250 613.5h20M561 613.5h20M249 614.5h21M561 614.5h21M249 615.5h21M561 615.5h21M249 616.5h21M561 616.5h21M248 617.5h23M560 617.5h23M248 618.5h23M560 618.5h23M247 619.5h24M560 619.5h24M247 620.5h24M560 620.5h24M247 621.5h24M560 621.5h24M246 622.5h25M560 622.5h25M246 623.5h26M559 623.5h26M245 624.5h27M559 624.5h27M245 625.5h27M559 625.5h27M244 626.5h28M559 626.5h28M244 627.5h28M559 627.5h28M243 628.5h30M558 628.5h30M242 629.5h31M558 629.5h31M242 630.5h31M558 630.5h31M241 631.5h33M557 631.5h33M240 632.5h34M557 632.5h34M239 633.5h35M557 633.5h35M238 634.5h37M556 634.5h37M238 635.5h37M556 635.5h37M238 636.5h38M555 636.5h38M238 637.5h38M555 637.5h38M238 638.5h39M554 638.5h39M238 639.5h39M554 639.5h39"/><path stroke="#ffe084" stroke-width="1" d="M277 286.5h66M488 286.5h66M277 287.5h62M492 287.5h62M276 288.5h60M495 288.5h60M276 289.5h57M498 289.5h57M275 290.5h55M501 290.5h55M275 291.5h52M504 291.5h52M274 292.5h50M507 292.5h50M274 293.5h47M510 293.5h47M274 294.5h44M513 294.5h44M273 295.5h42M516 295.5h42M273 296.5h40M518 296.5h40M273 297.5h37M521 297.5h37M272 298.5h36M523 298.5h36M272 299.5h33M526 299.5h33M272 300.5h31M528 300.5h31M272 301.5h28M531 301.5h28M272 302.5h26M533 302.5h26M271 303.5h26M534 303.5h26M271 304.5h25M535 304.5h25M271 305.5h24M536 305.5h24M271 306.5h23M537 306.5h23M271 307.5h23M537 307.5h23M271 308.5h22M538 308.5h22M270 309.5h22M539 309.5h22M270 310.5h22M539 310.5h22M270 311.5h21M540 311.5h21M270 312.5h20M541 312.5h20M270 313.5h20M541 313.5h20M270 314.5h19M542 314.5h19M270 315.5h19M542 315.5h19M270 316.5h18M543 316.5h18M269 317.5h19M543 317.5h19M269 318.5h19M543 318.5h19M269 319.5h18M544 319.5h18M269 320.5h18M544 320.5h18M269 321.5h17M545 321.5h17M269 322.5h17M545 322.5h17M269 323.5h17M545 323.5h17M269 324.5h16M546 324.5h16M269 325.5h16M546 325.5h16M269 326.5h15M547 326.5h15M269 327.5h15M547 327.5h15M269 328.5h15M547 328.5h15M268 329.5h16M547 329.5h16M268 330.5h15M548 330.5h15M268 331.5h15M548 331.5h15M268 332.5h15M548 332.5h15M268 333.5h14M549 333.5h14M268 334.5h14M549 334.5h14M268 335.5h14M549 335.5h14M268 336.5h14M549 336.5h14M268 337.5h13M550 337.5h13M268 338.5h13M550 338.5h13M268 339.5h13M550 339.5h13M268 340.5h13M550 340.5h13M268 341.5h12M551 341.5h12M268 342.5h12M551 342.5h12M268 343.5h12M551 343.5h12M268 344.5h12M551 344.5h12M268 345.5h12M551 345.5h12M268 346.5h12M551 346.5h12M268 347.5h12M551 347.5h12M268 348.5h12M551 348.5h12M269 349.5h11M551 349.5h11M269 350.5h11M551 350.5h11M269 351.5h11M551 351.5h11M269 352.5h12M550 352.5h12M269 353.5h12M550 353.5h12M269 354.5h12M550 354.5h12M270 355.5h11M550 355.5h11M270 356.5h11M550 356.5h11M270 357.5h11M550 357.5h11M270 358.5h11M550 358.5h11M270 359.5h11M550 359.5h11M271 360.5h10M550 360.5h10M271 361.5h10M550 361.5h10M271 362.5h10M550 362.5h10M271 363.5h11M549 363.5h11M271 364.5h11M549 364.5h11M271 365.5h11M549 365.5h11M271 366.5h11M549 366.5h11M272 367.5h10M549 367.5h10M272 368.5h10M549 368.5h10M272 369.5h10M549 369.5h10M272 370.5h10M549 370.5h10M272 371.5h10M549 371.5h10M272 372.5h10M549 372.5h10M273 373.5h9M549 373.5h9M273 374.5h9M549 374.5h9M273 375.5h9M549 375.5h9M273 376.5h9M549 376.5h9M273 377.5h10M548 377.5h10M273 378.5h10M548 378.5h10M273 379.5h10M548 379.5h10M273 380.5h10M548 380.5h10M274 381.5h9M548 381.5h9M274 382.5h9M548 382.5h9M274 383.5h9M548 383.5h9M274 384.5h9M548 384.5h9M274 385.5h9M548 385.5h9M274 386.5h9M548 386.5h9M274 387.5h9M548 387.5h9M274 388.5h9M548 388.5h9M274 389.5h9M548 389.5h9M275 390.5h8M548 390.5h8M275 391.5h8M548 391.5h8M275 392.5h8M548 392.5h8M275 393.5h9M547 393.5h9M275 394.5h9M547 394.5h9M275 395.5h9M547 395.5h9M275 396.5h9M547 396.5h9M275 397.5h9M547 397.5h9M275 398.5h9M547 398.5h9M276 399.5h8M547 399.5h8M276 400.5h8M547 400.5h8M276 401.5h8M547 401.5h8M276 402.5h8M547 402.5h8M276 403.5h8M547 403.5h8M276 404.5h8M547 404.5h8M276 405.5h8M547 405.5h8M276 406.5h8M547 406.5h8M276 407.5h8M547 407.5h8M276 408.5h8M547 408.5h8M276 409.5h8M547 409.5h8M276 410.5h8M547 410.5h8M276 411.5h8M547 411.5h8M276 412.5h8M547 412.5h8M276 413.5h8M547 413.5h8M276 414.5h8M547 414.5h8M276 415.5h8M547 415.5h8M277 416.5h7M547 416.5h7M277 417.5h7M547 417.5h7M277 418.5h7M547 418.5h7M277 419.5h7M547 419.5h7M277 420.5h7M547 420.5h7M277 421.5h7M547 421.5h7M277 422.5h8M546 422.5h8M277 423.5h8M546 423.5h8M277 424.5h8M546 424.5h8M277 425.5h8M546 425.5h8M277 426.5h8M546 426.5h8M277 427.5h8M546 427.5h8M277 428.5h8M546 428.5h8M277 429.5h8M546 429.5h8M277 430.5h8M546 430.5h8M277 431.5h8M546 431.5h8M277 432.5h8M546 432.5h8M277 433.5h8M546 433.5h8M277 434.5h8M546 434.5h8M277 435.5h8M546 435.5h8M277 436.5h8M546 436.5h8M277 437.5h8M546 437.5h8M277 438.5h8M546 438.5h8M277 439.5h8M546 439.5h8M277 440.5h8M546 440.5h8M277 441.5h8M546 441.5h8M278 442.5h7M546 442.5h7M278 443.5h7M546 443.5h7M278 444.5h7M546 444.5h7M278 445.5h7M546 445.5h7M278 446.5h7M546 446.5h7M278 447.5h7M546 447.5h7M278 448.5h7M546 448.5h7M278 449.5h7M546 449.5h7M278 450.5h7M546 450.5h7M278 451.5h7M546 451.5h7M278 452.5h7M546 452.5h7M278 453.5h7M546 453.5h7M278 454.5h7M546 454.5h7M278 455.5h7M546 455.5h7M278 456.5h7M546 456.5h7M278 457.5h7M546 457.5h7M278 458.5h7M546 458.5h7M278 459.5h7M546 459.5h7M278 460.5h7M546 460.5h7M278 461.5h7M546 461.5h7M278 462.5h7M546 462.5h7M278 463.5h7M546 463.5h7M278 464.5h7M546 464.5h7M278 465.5h7M546 465.5h7M278 466.5h7M546 466.5h7M278 467.5h7M546 467.5h7M278 468.5h7M546 468.5h7M278 469.5h7M546 469.5h7M278 470.5h7M546 470.5h7M278 471.5h7M546 471.5h7M278 472.5h7M546 472.5h7M278 473.5h7M546 473.5h7M278 474.5h7M546 474.5h7M278 475.5h7M546 475.5h7M278 476.5h7M546 476.5h7M278 477.5h7M546 477.5h7M278 478.5h7M546 478.5h7M278 479.5h7M546 479.5h7M278 480.5h7M546 480.5h7M278 481.5h7M546 481.5h7M278 482.5h7M546 482.5h7M278 483.5h7M546 483.5h7M277 484.5h8M546 484.5h8M277 485.5h8M546 485.5h8M277 486.5h8M546 486.5h8M277 487.5h8M546 487.5h8M277 488.5h8M546 488.5h8M277 489.5h8M546 489.5h8M277 490.5h8M546 490.5h8M277 491.5h8M546 491.5h8M277 492.5h8M546 492.5h8M277 493.5h8M546 493.5h8M277 494.5h8M546 494.5h8M277 495.5h8M546 495.5h8M277 496.5h8M546 496.5h8M277 497.5h8M546 497.5h8M277 498.5h8M546 498.5h8M277 499.5h8M546 499.5h8M277 500.5h8M546 500.5h8M277 501.5h8M546 501.5h8M277 502.5h8M546 502.5h8M277 503.5h8M546 503.5h8M277 504.5h7M547 504.5h7M277 505.5h7M547 505.5h7M277 506.5h7M547 506.5h7M277 507.5h7M547 507.5h7M277 508.5h7M547 508.5h7M277 509.5h7M547 509.5h7M276 510.5h8M547 510.5h8M276 511.5h8M547 511.5h8M276 512.5h8M547 512.5h8M276 513.5h8M547 513.5h8M276 514.5h8M547 514.5h8M276 515.5h8M547 515.5h8M276 516.5h8M547 516.5h8M276 517.5h8M547 517.5h8M276 518.5h8M547 518.5h8M276 519.5h8M547 519.5h8M276 520.5h8M547 520.5h8M276 521.5h8M547 521.5h8M276 522.5h8M547 522.5h8M276 523.5h8M547 523.5h8M276 524.5h8M547 524.5h8M276 525.5h8M547 525.5h8M276 526.5h8M547 526.5h8M275 527.5h9M547 527.5h9M275 528.5h9M547 528.5h9M275 529.5h9M547 529.5h9M275 530.5h9M547 530.5h9M275 531.5h9M547 531.5h9M275 532.5h9M547 532.5h9M275 533.5h8M548 533.5h8M275 534.5h8M548 534.5h8M275 535.5h8M548 535.5h8M274 536.5h9M548 536.5h9M274 537.5h9M548 537.5h9M274 538.5h9M548 538.5h9M274 539.5h9M548 539.5h9M274 540.5h9M548 540.5h9M274 541.5h9M548 541.5h9M274 542.5h9M548 542.5h9M274 543.5h9M548 543.5h9M274 544.5h9M548 544.5h9M273 545.5h10M548 545.5h10M273 546.5h10M548 546.5h10M273 547.5h10M548 547.5h10M273 548.5h10M548 548.5h10M273 549.5h9M549 549.5h9M273 550.5h9M549 550.5h9M273 551.5h9M549 551.5h9M273 552.5h9M549 552.5h9M272 553.5h10M549 553.5h10M272 554.5h10M549 554.5h10M272 555.5h10M549 555.5h10M272 556.5h10M549 556.5h10M272 557.5h10M549 557.5h10M272 558.5h10M549 558.5h10M271 559.5h11M549 559.5h11M271 560.5h11M549 560.5h11M271 561.5h11M549 561.5h11M271 562.5h11M549 562.5h11M271 563.5h10M550 563.5h10M271 564.5h10M550 564.5h10M271 565.5h10M550 565.5h10M270 566.5h11M550 566.5h11M270 567.5h11M550 567.5h11M270 568.5h11M550 568.5h11M270 569.5h11M550 569.5h11M270 570.5h11M550 570.5h11M269 571.5h12M550 571.5h12M269 572.5h12M550 572.5h12M269 573.5h12M550 573.5h12M269 574.5h11M551 574.5h11M269 575.5h11M551 575.5h11M269 576.5h11M551 576.5h11M268 577.5h12M551 577.5h12M268 578.5h12M551 578.5h12M268 579.5h12M551 579.5h12M268 580.5h12M551 580.5h12M268 581.5h12M551 581.5h12M268 582.5h12M551 582.5h12M268 583.5h12M551 583.5h12M268 584.5h12M551 584.5h12M268 585.5h13M550 585.5h13M268 586.5h13M550 586.5h13M268 587.5h13M550 587.5h13M268 588.5h13M550 588.5h13M268 589.5h14M549 589.5h14M268 590.5h14M549 590.5h14M268 591.5h14M549 591.5h14M268 592.5h14M549 592.5h14M268 593.5h15M548 593.5h15M268 594.5h15M548 594.5h15M268 595.5h15M548 595.5h15M268 596.5h16M547 596.5h16M269 597.5h15M547 597.5h15M269 598.5h15M547 598.5h15M269 599.5h15M547 599.5h15M269 600.5h16M546 600.5h16M269 601.5h16M546 601.5h16M269 602.5h17M545 602.5h17M269 603.5h17M545 603.5h17M269 604.5h17M545 604.5h17M269 605.5h18M544 605.5h18M269 606.5h18M544 606.5h18M269 607.5h19M543 607.5h19M269 608.5h19M543 608.5h19M270 609.5h18M543 609.5h18M270 610.5h19M542 610.5h19M270 611.5h19M542 611.5h19M270 612.5h20M541 612.5h20M270 613.5h20M541 613.5h20M270 614.5h21M540 614.5h21M270 615.5h22M539 615.5h22M270 616.5h22M539 616.5h22M271 617.5h22M538 617.5h22M271 618.5h23M537 618.5h23M271 619.5h23M537 619.5h23M271 620.5h24M536 620.5h24M271 621.5h25M535 621.5h25M271 622.5h26M534 622.5h26M272 623.5h26M533 623.5h26M272 624.5h28M531 624.5h28M272 625.5h31M528 625.5h31M272 626.5h33M526 626.5h33M272 627.5h36M523 627.5h36M273 628.5h37M521 628.5h37M273 629.5h40M518 629.5h40M273 630.5h42M516 630.5h42M274 631.5h44M513 631.5h44M274 632.5h47M510 632.5h47M274 633.5h50M507 633.5h50M275 634.5h52M504 634.5h52M275 635.5h55M501 635.5h55M276 636.5h57M498 636.5h57M276 637.5h60M495 637.5h60M277 638.5h62M492 638.5h62M277 639.5h66M488 639.5h66"/><path stroke="#fff474" stroke-width="1" d="M343 286.5h145M339 287.5h153M336 288.5h159M333 289.5h165M330 290.5h171M327 291.5h177M324 292.5h183M321 293.5h189M318 294.5h195M315 295.5h201M313 296.5h205M310 297.5h211M308 298.5h215M305 299.5h221M303 300.5h225M300 301.5h231M298 302.5h235M297 303.5h237M296 304.5h239M295 305.5h241M294 306.5h60M477 306.5h60M294 307.5h57M480 307.5h57M293 308.5h55M483 308.5h55M292 309.5h54M485 309.5h54M292 310.5h51M488 310.5h51M291 311.5h50M490 311.5h50M290 312.5h48M493 312.5h48M290 313.5h46M495 313.5h46M289 314.5h44M498 314.5h44M289 315.5h42M500 315.5h42M288 316.5h41M502 316.5h41M288 317.5h38M505 317.5h38M288 318.5h36M507 318.5h36M287 319.5h35M509 319.5h35M287 320.5h33M511 320.5h33M286 321.5h32M513 321.5h32M286 322.5h30M515 322.5h30M286 323.5h28M517 323.5h28M285 324.5h27M519 324.5h27M285 325.5h25M521 325.5h25M284 326.5h24M523 326.5h24M284 327.5h22M525 327.5h22M284 328.5h20M527 328.5h20M284 329.5h18M529 329.5h18M283 330.5h17M531 330.5h17M283 331.5h16M532 331.5h16M283 332.5h14M534 332.5h14M282 333.5h15M534 333.5h15M282 334.5h14M535 334.5h14M282 335.5h14M535 335.5h14M282 336.5h13M536 336.5h13M281 337.5h14M536 337.5h14M281 338.5h13M537 338.5h13M281 339.5h13M537 339.5h13M281 340.5h13M537 340.5h13M280 341.5h13M538 341.5h13M280 342.5h13M538 342.5h13M280 343.5h12M539 343.5h12M280 344.5h12M539 344.5h12M280 345.5h12M539 345.5h12M280 346.5h12M539 346.5h12M280 347.5h12M539 347.5h12M280 348.5h12M539 348.5h12M280 349.5h12M539 349.5h12M280 350.5h12M539 350.5h12M280 351.5h12M539 351.5h12M281 352.5h11M539 352.5h11M281 353.5h11M539 353.5h11M281 354.5h11M539 354.5h11M281 355.5h11M539 355.5h11M281 356.5h11M539 356.5h11M281 357.5h11M539 357.5h11M281 358.5h11M539 358.5h11M281 359.5h11M539 359.5h11M281 360.5h11M539 360.5h11M281 361.5h11M539 361.5h11M281 362.5h11M539 362.5h11M282 363.5h10M539 363.5h10M282 364.5h10M539 364.5h10M282 365.5h10M539 365.5h10M282 366.5h10M539 366.5h10M282 367.5h10M539 367.5h10M282 368.5h10M539 368.5h10M282 369.5h10M539 369.5h10M282 370.5h10M539 370.5h10M282 371.5h10M539 371.5h10M282 372.5h10M539 372.5h10M282 373.5h10M539 373.5h10M282 374.5h10M539 374.5h10M282 375.5h10M539 375.5h10M282 376.5h10M539 376.5h10M283 377.5h9M539 377.5h9M283 378.5h9M539 378.5h9M283 379.5h9M539 379.5h9M283 380.5h9M539 380.5h9M283 381.5h9M539 381.5h9M283 382.5h9M539 382.5h9M283 383.5h9M539 383.5h9M283 384.5h9M539 384.5h9M283 385.5h9M539 385.5h9M283 386.5h9M539 386.5h9M283 387.5h9M539 387.5h9M283 388.5h9M539 388.5h9M283 389.5h9M539 389.5h9M283 390.5h9M539 390.5h9M283 391.5h9M539 391.5h9M283 392.5h9M539 392.5h9M284 393.5h8M539 393.5h8M284 394.5h8M539 394.5h8M284 395.5h8M539 395.5h8M284 396.5h8M539 396.5h8M284 397.5h8M539 397.5h8M284 398.5h8M539 398.5h8M284 399.5h8M539 399.5h8M284 400.5h8M539 400.5h8M284 401.5h8M539 401.5h8M284 402.5h8M539 402.5h8M284 403.5h8M539 403.5h8M284 404.5h8M539 404.5h8M284 405.5h8M539 405.5h8M284 406.5h8M539 406.5h8M284 407.5h8M539 407.5h8M284 408.5h8M539 408.5h8M284 409.5h8M539 409.5h8M284 410.5h8M539 410.5h8M284 411.5h8M539 411.5h8M284 412.5h8M539 412.5h8M284 413.5h8M539 413.5h8M284 414.5h8M539 414.5h8M284 415.5h8M539 415.5h8M284 416.5h8M539 416.5h8M284 417.5h8M539 417.5h8M284 418.5h8M539 418.5h8M284 419.5h8M539 419.5h8M284 420.5h8M539 420.5h8M284 421.5h8M539 421.5h8M285 422.5h7M539 422.5h7M285 423.5h7M539 423.5h7M285 424.5h7M539 424.5h7M285 425.5h7M539 425.5h7M285 426.5h7M539 426.5h7M285 427.5h7M539 427.5h7M285 428.5h7M539 428.5h7M285 429.5h7M539 429.5h7M285 430.5h7M539 430.5h7M285 431.5h7M539 431.5h7M285 432.5h7M539 432.5h7M285 433.5h7M539 433.5h7M285 434.5h7M539 434.5h7M285 435.5h7M539 435.5h7M285 436.5h7M539 436.5h7M285 437.5h7M539 437.5h7M285 438.5h7M539 438.5h7M285 439.5h7M539 439.5h7M285 440.5h7M539 440.5h7M285 441.5h7M539 441.5h7M285 442.5h7M539 442.5h7M285 443.5h7M539 443.5h7M285 444.5h7M539 444.5h7M285 445.5h7M539 445.5h7M285 446.5h8M538 446.5h8M285 447.5h8M538 447.5h8M285 448.5h8M538 448.5h8M285 449.5h8M538 449.5h8M285 450.5h8M538 450.5h8M285 451.5h8M538 451.5h8M285 452.5h8M538 452.5h8M285 453.5h8M538 453.5h8M285 454.5h8M538 454.5h8M285 455.5h8M538 455.5h8M285 456.5h8M538 456.5h8M285 457.5h8M538 457.5h8M285 458.5h8M538 458.5h8M285 459.5h8M538 459.5h8M285 460.5h8M538 460.5h8M285 461.5h8M538 461.5h8M285 462.5h8M538 462.5h8M285 463.5h8M538 463.5h8M285 464.5h8M538 464.5h8M285 465.5h8M538 465.5h8M285 466.5h8M538 466.5h8M285 467.5h8M538 467.5h8M285 468.5h8M538 468.5h8M285 469.5h8M538 469.5h8M285 470.5h8M538 470.5h8M285 471.5h8M538 471.5h8M285 472.5h8M538 472.5h8M285 473.5h8M538 473.5h8M285 474.5h8M538 474.5h8M285 475.5h8M538 475.5h8M285 476.5h8M538 476.5h8M285 477.5h8M538 477.5h8M285 478.5h8M538 478.5h8M285 479.5h8M538 479.5h8M285 480.5h7M539 480.5h7M285 481.5h7M539 481.5h7M285 482.5h7M539 482.5h7M285 483.5h7M539 483.5h7M285 484.5h7M539 484.5h7M285 485.5h7M539 485.5h7M285 486.5h7M539 486.5h7M285 487.5h7M539 487.5h7M285 488.5h7M539 488.5h7M285 489.5h7M539 489.5h7M285 490.5h7M539 490.5h7M285 491.5h7M539 491.5h7M285 492.5h7M539 492.5h7M285 493.5h7M539 493.5h7M285 494.5h7M539 494.5h7M285 495.5h7M539 495.5h7M285 496.5h7M539 496.5h7M285 497.5h7M539 497.5h7M285 498.5h7M539 498.5h7M285 499.5h7M539 499.5h7M285 500.5h7M539 500.5h7M285 501.5h7M539 501.5h7M285 502.5h7M539 502.5h7M285 503.5h7M539 503.5h7M284 504.5h8M539 504.5h8M284 505.5h8M539 505.5h8M284 506.5h8M539 506.5h8M284 507.5h8M539 507.5h8M284 508.5h8M539 508.5h8M284 509.5h8M539 509.5h8M284 510.5h8M539 510.5h8M284 511.5h8M539 511.5h8M284 512.5h8M539 512.5h8M284 513.5h8M539 513.5h8M284 514.5h8M539 514.5h8M284 515.5h8M539 515.5h8M284 516.5h8M539 516.5h8M284 517.5h8M539 517.5h8M284 518.5h8M539 518.5h8M284 519.5h8M539 519.5h8M284 520.5h8M539 520.5h8M284 521.5h8M539 521.5h8M284 522.5h8M539 522.5h8M284 523.5h8M539 523.5h8M284 524.5h8M539 524.5h8M284 525.5h8M539 525.5h8M284 526.5h8M539 526.5h8M284 527.5h8M539 527.5h8M284 528.5h8M539 528.5h8M284 529.5h8M539 529.5h8M284 530.5h8M539 530.5h8M284 531.5h8M539 531.5h8M284 532.5h8M539 532.5h8M283 533.5h9M539 533.5h9M283 534.5h9M539 534.5h9M283 535.5h9M539 535.5h9M283 536.5h9M539 536.5h9M283 537.5h9M539 537.5h9M283 538.5h9M539 538.5h9M283 539.5h9M539 539.5h9M283 540.5h9M539 540.5h9M283 541.5h9M539 541.5h9M283 542.5h9M539 542.5h9M283 543.5h9M539 543.5h9M283 544.5h9M539 544.5h9M283 545.5h9M539 545.5h9M283 546.5h9M539 546.5h9M283 547.5h9M539 547.5h9M283 548.5h9M539 548.5h9M282 549.5h10M539 549.5h10M282 550.5h10M539 550.5h10M282 551.5h10M539 551.5h10M282 552.5h10M539 552.5h10M282 553.5h10M539 553.5h10M282 554.5h10M539 554.5h10M282 555.5h10M539 555.5h10M282 556.5h10M539 556.5h10M282 557.5h10M539 557.5h10M282 558.5h10M539 558.5h10M282 559.5h10M539 559.5h10M282 560.5h10M539 560.5h10M282 561.5h10M539 561.5h10M282 562.5h10M539 562.5h10M281 563.5h11M539 563.5h11M281 564.5h11M539 564.5h11M281 565.5h11M539 565.5h11M281 566.5h11M539 566.5h11M281 567.5h11M539 567.5h11M281 568.5h11M539 568.5h11M281 569.5h11M539 569.5h11M281 570.5h11M539 570.5h11M281 571.5h11M539 571.5h11M281 572.5h11M539 572.5h11M281 573.5h11M539 573.5h11M280 574.5h12M539 574.5h12M280 575.5h12M539 575.5h12M280 576.5h12M539 576.5h12M280 577.5h12M539 577.5h12M280 578.5h12M539 578.5h12M280 579.5h12M539 579.5h12M280 580.5h12M539 580.5h12M280 581.5h12M539 581.5h12M280 582.5h12M539 582.5h12M280 583.5h13M538 583.5h13M280 584.5h13M538 584.5h13M281 585.5h13M537 585.5h13M281 586.5h13M537 586.5h13M281 587.5h13M537 587.5h13M281 588.5h14M536 588.5h14M282 589.5h13M536 589.5h13M282 590.5h14M535 590.5h14M282 591.5h14M535 591.5h14M282 592.5h15M534 592.5h15M283 593.5h14M534 593.5h14M283 594.5h16M532 594.5h16M283 595.5h17M531 595.5h17M284 596.5h18M529 596.5h18M284 597.5h20M527 597.5h20M284 598.5h22M525 598.5h22M284 599.5h24M523 599.5h24M285 600.5h25M521 600.5h25M285 601.5h27M519 601.5h27M286 602.5h28M517 602.5h28M286 603.5h30M515 603.5h30M286 604.5h32M513 604.5h32M287 605.5h33M511 605.5h33M287 606.5h35M509 606.5h35M288 607.5h36M507 607.5h36M288 608.5h38M505 608.5h38M288 609.5h41M502 609.5h41M289 610.5h42M500 610.5h42M289 611.5h44M498 611.5h44M290 612.5h46M495 612.5h46M290 613.5h48M493 613.5h48M291 614.5h50M490 614.5h50M292 615.5h51M488 615.5h51M292 616.5h54M485 616.5h54M293 617.5h55M483 617.5h55M294 618.5h57M480 618.5h57M294 619.5h60M477 619.5h60M295 620.5h241M296 621.5h239M297 622.5h237M298 623.5h235M300 624.5h231M303 625.5h225M305 626.5h221M308 627.5h215M310 628.5h211M313 629.5h205M315 630.5h201M318 631.5h195M321 632.5h189M324 633.5h183M327 634.5h177M330 635.5h171M333 636.5h165M336 637.5h159M339 638.5h153M343 639.5h145"/><path stroke="#c4ec74" stroke-width="1" d="M354 306.5h123M351 307.5h129M348 308.5h135M346 309.5h139M343 310.5h145M341 311.5h149M338 312.5h155M336 313.5h159M333 314.5h165M331 315.5h169M329 316.5h173M326 317.5h179M324 318.5h183M322 319.5h187M320 320.5h191M318 321.5h195M316 322.5h199M314 323.5h203M312 324.5h207M310 325.5h211M308 326.5h102M421 326.5h102M306 327.5h77M448 327.5h77M304 328.5h55M472 328.5h55M302 329.5h52M477 329.5h52M300 330.5h52M479 330.5h52M299 331.5h51M481 331.5h51M297 332.5h51M483 332.5h51M297 333.5h49M485 333.5h49M296 334.5h48M487 334.5h48M296 335.5h45M490 335.5h45M295 336.5h44M492 336.5h44M295 337.5h42M494 337.5h42M294 338.5h41M496 338.5h41M294 339.5h40M497 339.5h40M294 340.5h38M499 340.5h38M293 341.5h37M501 341.5h37M293 342.5h35M503 342.5h35M292 343.5h34M505 343.5h34M292 344.5h32M507 344.5h32M292 345.5h31M508 345.5h31M292 346.5h30M509 346.5h30M292 347.5h30M509 347.5h30M292 348.5h29M510 348.5h29M292 349.5h28M511 349.5h28M292 350.5h28M511 350.5h28M292 351.5h27M512 351.5h27M292 352.5h26M513 352.5h26M292 353.5h26M513 353.5h26M292 354.5h25M514 354.5h25M292 355.5h25M514 355.5h25M292 356.5h24M515 356.5h24M292 357.5h24M515 357.5h24M292 358.5h23M516 358.5h23M292 359.5h23M516 359.5h23M292 360.5h22M517 360.5h22M292 361.5h22M517 361.5h22M292 362.5h22M517 362.5h22M292 363.5h21M518 363.5h21M292 364.5h21M518 364.5h21M292 365.5h21M518 365.5h21M292 366.5h20M519 366.5h20M292 367.5h20M519 367.5h20M292 368.5h20M519 368.5h20M292 369.5h19M520 369.5h19M292 370.5h19M520 370.5h19M292 371.5h19M520 371.5h19M292 372.5h18M521 372.5h18M292 373.5h18M521 373.5h18M292 374.5h18M521 374.5h18M292 375.5h17M522 375.5h17M292 376.5h17M522 376.5h17M292 377.5h17M522 377.5h17M292 378.5h17M522 378.5h17M292 379.5h17M522 379.5h17M292 380.5h16M523 380.5h16M292 381.5h16M523 381.5h16M292 382.5h16M523 382.5h16M292 383.5h16M523 383.5h16M292 384.5h15M524 384.5h15M292 385.5h15M524 385.5h15M292 386.5h15M524 386.5h15M292 387.5h15M524 387.5h15M292 388.5h15M524 388.5h15M292 389.5h14M525 389.5h14M292 390.5h14M525 390.5h14M292 391.5h14M525 391.5h14M292 392.5h14M525 392.5h14M292 393.5h14M525 393.5h14M292 394.5h14M525 394.5h14M292 395.5h13M526 395.5h13M292 396.5h13M526 396.5h13M292 397.5h13M526 397.5h13M292 398.5h13M526 398.5h13M292 399.5h13M526 399.5h13M292 400.5h13M526 400.5h13M292 401.5h13M526 401.5h13M292 402.5h12M527 402.5h12M292 403.5h12M527 403.5h12M292 404.5h12M527 404.5h12M292 405.5h12M527 405.5h12M292 406.5h12M527 406.5h12M292 407.5h12M527 407.5h12M292 408.5h12M527 408.5h12M292 409.5h12M527 409.5h12M292 410.5h12M527 410.5h12M292 411.5h12M527 411.5h12M292 412.5h12M527 412.5h12M292 413.5h12M527 413.5h12M292 414.5h12M527 414.5h12M292 415.5h12M527 415.5h12M292 416.5h12M527 416.5h12M292 417.5h12M527 417.5h12M292 418.5h12M527 418.5h12M292 419.5h12M527 419.5h12M292 420.5h12M527 420.5h12M292 421.5h12M527 421.5h12M292 422.5h12M527 422.5h12M292 423.5h12M527 423.5h12M292 424.5h12M527 424.5h12M292 425.5h12M527 425.5h12M292 426.5h12M527 426.5h12M292 427.5h12M527 427.5h12M292 428.5h12M527 428.5h12M292 429.5h12M527 429.5h12M292 430.5h12M527 430.5h12M292 431.5h11M528 431.5h11M292 432.5h11M528 432.5h11M292 433.5h11M528 433.5h11M292 434.5h11M528 434.5h11M292 435.5h11M528 435.5h11M292 436.5h11M528 436.5h11M292 437.5h11M528 437.5h11M292 438.5h11M528 438.5h11M292 439.5h11M528 439.5h11M292 440.5h11M528 440.5h11M292 441.5h11M528 441.5h11M292 442.5h11M528 442.5h11M292 443.5h11M528 443.5h11M292 444.5h11M528 444.5h11M292 445.5h11M528 445.5h11M293 446.5h10M528 446.5h10M293 447.5h10M528 447.5h10M293 448.5h10M528 448.5h10M293 449.5h10M528 449.5h10M293 450.5h10M528 450.5h10M293 451.5h10M528 451.5h10M293 452.5h10M528 452.5h10M293 453.5h10M528 453.5h10M293 454.5h10M528 454.5h10M293 455.5h10M528 455.5h10M293 456.5h10M528 456.5h10M293 457.5h10M528 457.5h10M293 458.5h10M528 458.5h10M293 459.5h10M528 459.5h10M293 460.5h10M528 460.5h10M293 461.5h10M528 461.5h10M293 462.5h10M528 462.5h10M293 463.5h10M528 463.5h10M293 464.5h10M528 464.5h10M293 465.5h10M528 465.5h10M293 466.5h10M528 466.5h10M293 467.5h10M528 467.5h10M293 468.5h10M528 468.5h10M293 469.5h10M528 469.5h10M293 470.5h10M528 470.5h10M293 471.5h10M528 471.5h10M293 472.5h10M528 472.5h10M293 473.5h10M528 473.5h10M293 474.5h10M528 474.5h10M293 475.5h10M528 475.5h10M293 476.5h10M528 476.5h10M293 477.5h10M528 477.5h10M293 478.5h10M528 478.5h10M293 479.5h10M528 479.5h10M292 480.5h11M528 480.5h11M292 481.5h11M528 481.5h11M292 482.5h11M528 482.5h11M292 483.5h11M528 483.5h11M292 484.5h11M528 484.5h11M292 485.5h11M528 485.5h11M292 486.5h11M528 486.5h11M292 487.5h11M528 487.5h11M292 488.5h11M528 488.5h11M292 489.5h11M528 489.5h11M292 490.5h11M528 490.5h11M292 491.5h11M528 491.5h11M292 492.5h11M528 492.5h11M292 493.5h11M528 493.5h11M292 494.5h11M528 494.5h11M292 495.5h12M527 495.5h12M292 496.5h12M527 496.5h12M292 497.5h12M527 497.5h12M292 498.5h12M527 498.5h12M292 499.5h12M527 499.5h12M292 500.5h12M527 500.5h12M292 501.5h12M527 501.5h12M292 502.5h12M527 502.5h12M292 503.5h12M527 503.5h12M292 504.5h12M527 504.5h12M292 505.5h12M527 505.5h12M292 506.5h12M527 506.5h12M292 507.5h12M527 507.5h12M292 508.5h12M527 508.5h12M292 509.5h12M527 509.5h12M292 510.5h12M527 510.5h12M292 511.5h12M527 511.5h12M292 512.5h12M527 512.5h12M292 513.5h12M527 513.5h12M292 514.5h12M527 514.5h12M292 515.5h12M527 515.5h12M292 516.5h12M527 516.5h12M292 517.5h12M527 517.5h12M292 518.5h12M527 518.5h12M292 519.5h12M527 519.5h12M292 520.5h12M527 520.5h12M292 521.5h12M527 521.5h12M292 522.5h12M527 522.5h12M292 523.5h12M527 523.5h12M292 524.5h13M526 524.5h13M292 525.5h13M526 525.5h13M292 526.5h13M526 526.5h13M292 527.5h13M526 527.5h13M292 528.5h13M526 528.5h13M292 529.5h13M526 529.5h13M292 530.5h13M526 530.5h13M292 531.5h14M525 531.5h14M292 532.5h14M525 532.5h14M292 533.5h14M525 533.5h14M292 534.5h14M525 534.5h14M292 535.5h14M525 535.5h14M292 536.5h14M525 536.5h14M292 537.5h15M524 537.5h15M292 538.5h15M524 538.5h15M292 539.5h15M524 539.5h15M292 540.5h15M524 540.5h15M292 541.5h15M524 541.5h15M292 542.5h16M523 542.5h16M292 543.5h16M523 543.5h16M292 544.5h16M523 544.5h16M292 545.5h16M523 545.5h16M292 546.5h17M522 546.5h17M292 547.5h17M522 547.5h17M292 548.5h17M522 548.5h17M292 549.5h17M522 549.5h17M292 550.5h17M522 550.5h17M292 551.5h18M521 551.5h18M292 552.5h18M521 552.5h18M292 553.5h18M521 553.5h18M292 554.5h19M520 554.5h19M292 555.5h19M520 555.5h19M292 556.5h19M520 556.5h19M292 557.5h20M519 557.5h20M292 558.5h20M519 558.5h20M292 559.5h20M519 559.5h20M292 560.5h21M518 560.5h21M292 561.5h21M518 561.5h21M292 562.5h21M518 562.5h21M292 563.5h22M517 563.5h22M292 564.5h22M517 564.5h22M292 565.5h22M517 565.5h22M292 566.5h23M516 566.5h23M292 567.5h23M516 567.5h23M292 568.5h24M515 568.5h24M292 569.5h24M515 569.5h24M292 570.5h25M514 570.5h25M292 571.5h25M514 571.5h25M292 572.5h26M513 572.5h26M292 573.5h26M513 573.5h26M292 574.5h27M512 574.5h27M292 575.5h28M511 575.5h28M292 576.5h28M511 576.5h28M292 577.5h29M510 577.5h29M292 578.5h30M509 578.5h30M292 579.5h30M509 579.5h30M292 580.5h31M508 580.5h31M292 581.5h32M507 581.5h32M292 582.5h34M505 582.5h34M293 583.5h35M503 583.5h35M293 584.5h37M501 584.5h37M294 585.5h38M499 585.5h38M294 586.5h40M497 586.5h40M294 587.5h41M496 587.5h41M295 588.5h42M494 588.5h42M295 589.5h44M492 589.5h44M296 590.5h45M490 590.5h45M296 591.5h48M487 591.5h48M297 592.5h49M485 592.5h49M297 593.5h51M483 593.5h51M299 594.5h51M481 594.5h51M300 595.5h52M479 595.5h52M302 596.5h52M477 596.5h52M304 597.5h55M472 597.5h55M306 598.5h77M448 598.5h77M308 599.5h102M421 599.5h102M310 600.5h211M312 601.5h207M314 602.5h203M316 603.5h199M318 604.5h195M320 605.5h191M322 606.5h187M324 607.5h183M326 608.5h179M329 609.5h173M331 610.5h169M333 611.5h165M336 612.5h159M338 613.5h155M341 614.5h149M343 615.5h145M346 616.5h139M348 617.5h135M351 618.5h129M354 619.5h123"/><path stroke="#68de70" stroke-width="1" d="M410 326.5h11M383 327.5h65M359 328.5h113M354 329.5h123M352 330.5h127M350 331.5h131M348 332.5h135M346 333.5h139M344 334.5h143M341 335.5h149M339 336.5h153M337 337.5h157M335 338.5h161M334 339.5h163M332 340.5h167M330 341.5h171M328 342.5h175M326 343.5h179M324 344.5h183M323 345.5h185M322 346.5h187M322 347.5h86M423 347.5h86M321 348.5h76M434 348.5h76M320 349.5h67M444 349.5h67M320 350.5h58M453 350.5h58M319 351.5h50M462 351.5h50M318 352.5h44M469 352.5h44M318 353.5h38M475 353.5h38M317 354.5h38M476 354.5h38M317 355.5h36M478 355.5h36M316 356.5h36M479 356.5h36M316 357.5h35M480 357.5h35M315 358.5h35M481 358.5h35M315 359.5h34M482 359.5h34M314 360.5h34M483 360.5h34M314 361.5h33M484 361.5h33M314 362.5h32M485 362.5h32M313 363.5h32M486 363.5h32M313 364.5h31M487 364.5h31M313 365.5h30M488 365.5h30M312 366.5h30M489 366.5h30M312 367.5h30M489 367.5h30M312 368.5h29M490 368.5h29M311 369.5h29M491 369.5h29M311 370.5h28M492 370.5h28M311 371.5h28M492 371.5h28M310 372.5h28M493 372.5h28M310 373.5h27M494 373.5h27M310 374.5h26M495 374.5h26M309 375.5h27M495 375.5h27M309 376.5h26M496 376.5h26M309 377.5h26M496 377.5h26M309 378.5h25M497 378.5h25M309 379.5h24M498 379.5h24M308 380.5h25M498 380.5h25M308 381.5h24M499 381.5h24M308 382.5h24M499 382.5h24M308 383.5h23M500 383.5h23M307 384.5h24M500 384.5h24M307 385.5h23M501 385.5h23M307 386.5h23M501 386.5h23M307 387.5h22M502 387.5h22M307 388.5h22M502 388.5h22M306 389.5h22M503 389.5h22M306 390.5h22M503 390.5h22M306 391.5h22M503 391.5h22M306 392.5h21M504 392.5h21M306 393.5h21M504 393.5h21M306 394.5h20M505 394.5h20M305 395.5h21M505 395.5h21M305 396.5h21M505 396.5h21M305 397.5h20M506 397.5h20M305 398.5h20M506 398.5h20M305 399.5h20M506 399.5h20M305 400.5h19M507 400.5h19M305 401.5h19M507 401.5h19M304 402.5h19M508 402.5h19M304 403.5h19M508 403.5h19M304 404.5h19M508 404.5h19M304 405.5h19M508 405.5h19M304 406.5h19M508 406.5h19M304 407.5h19M508 407.5h19M304 408.5h19M508 408.5h19M304 409.5h18M509 409.5h18M304 410.5h18M509 410.5h18M304 411.5h18M509 411.5h18M304 412.5h18M509 412.5h18M304 413.5h18M509 413.5h18M304 414.5h18M509 414.5h18M304 415.5h18M509 415.5h18M304 416.5h18M509 416.5h18M304 417.5h18M509 417.5h18M304 418.5h18M509 418.5h18M304 419.5h18M509 419.5h18M304 420.5h17M510 420.5h17M304 421.5h17M510 421.5h17M304 422.5h17M510 422.5h17M304 423.5h17M510 423.5h17M304 424.5h17M510 424.5h17M304 425.5h17M510 425.5h17M304 426.5h17M510 426.5h17M304 427.5h17M510 427.5h17M304 428.5h17M510 428.5h17M304 429.5h17M510 429.5h17M304 430.5h17M510 430.5h17M303 431.5h18M510 431.5h18M303 432.5h17M511 432.5h17M303 433.5h17M511 433.5h17M303 434.5h17M511 434.5h17M303 435.5h17M511 435.5h17M303 436.5h17M511 436.5h17M303 437.5h17M511 437.5h17M303 438.5h17M511 438.5h17M303 439.5h17M511 439.5h17M303 440.5h17M511 440.5h17M303 441.5h17M511 441.5h17M303 442.5h17M511 442.5h17M303 443.5h17M511 443.5h17M303 444.5h17M511 444.5h17M303 445.5h16M512 445.5h16M303 446.5h16M512 446.5h16M303 447.5h16M512 447.5h16M303 448.5h16M512 448.5h16M303 449.5h16M512 449.5h16M303 450.5h16M512 450.5h16M303 451.5h16M512 451.5h16M303 452.5h16M512 452.5h16M303 453.5h16M512 453.5h16M303 454.5h16M512 454.5h16M303 455.5h16M512 455.5h16M303 456.5h16M512 456.5h16M303 457.5h16M512 457.5h16M303 458.5h16M512 458.5h16M303 459.5h15M513 459.5h15M303 460.5h15M513 460.5h15M303 461.5h15M513 461.5h15M303 462.5h15M513 462.5h15M303 463.5h15M513 463.5h15M303 464.5h15M513 464.5h15M303 465.5h15M513 465.5h15M303 466.5h15M513 466.5h15M303 467.5h16M512 467.5h16M303 468.5h16M512 468.5h16M303 469.5h16M512 469.5h16M303 470.5h16M512 470.5h16M303 471.5h16M512 471.5h16M303 472.5h16M512 472.5h16M303 473.5h16M512 473.5h16M303 474.5h16M512 474.5h16M303 475.5h16M512 475.5h16M303 476.5h16M512 476.5h16M303 477.5h16M512 477.5h16M303 478.5h16M512 478.5h16M303 479.5h16M512 479.5h16M303 480.5h16M512 480.5h16M303 481.5h17M511 481.5h17M303 482.5h17M511 482.5h17M303 483.5h17M511 483.5h17M303 484.5h17M511 484.5h17M303 485.5h17M511 485.5h17M303 486.5h17M511 486.5h17M303 487.5h17M511 487.5h17M303 488.5h17M511 488.5h17M303 489.5h17M511 489.5h17M303 490.5h17M511 490.5h17M303 491.5h17M511 491.5h17M303 492.5h17M511 492.5h17M303 493.5h17M511 493.5h17M303 494.5h18M510 494.5h18M304 495.5h17M510 495.5h17M304 496.5h17M510 496.5h17M304 497.5h17M510 497.5h17M304 498.5h17M510 498.5h17M304 499.5h17M510 499.5h17M304 500.5h17M510 500.5h17M304 501.5h17M510 501.5h17M304 502.5h17M510 502.5h17M304 503.5h17M510 503.5h17M304 504.5h17M510 504.5h17M304 505.5h17M510 505.5h17M304 506.5h18M509 506.5h18M304 507.5h18M509 507.5h18M304 508.5h18M509 508.5h18M304 509.5h18M509 509.5h18M304 510.5h18M509 510.5h18M304 511.5h18M509 511.5h18M304 512.5h18M509 512.5h18M304 513.5h18M509 513.5h18M304 514.5h18M509 514.5h18M304 515.5h18M509 515.5h18M304 516.5h18M509 516.5h18M304 517.5h19M508 517.5h19M304 518.5h19M508 518.5h19M304 519.5h19M508 519.5h19M304 520.5h19M508 520.5h19M304 521.5h19M508 521.5h19M304 522.5h19M508 522.5h19M304 523.5h19M508 523.5h19M305 524.5h19M507 524.5h19M305 525.5h19M507 525.5h19M305 526.5h20M506 526.5h20M305 527.5h20M506 527.5h20M305 528.5h20M506 528.5h20M305 529.5h21M505 529.5h21M305 530.5h21M505 530.5h21M306 531.5h20M505 531.5h20M306 532.5h21M504 532.5h21M306 533.5h21M504 533.5h21M306 534.5h22M503 534.5h22M306 535.5h22M503 535.5h22M306 536.5h22M503 536.5h22M307 537.5h22M502 537.5h22M307 538.5h22M502 538.5h22M307 539.5h23M501 539.5h23M307 540.5h23M501 540.5h23M307 541.5h24M500 541.5h24M308 542.5h23M500 542.5h23M308 543.5h24M499 543.5h24M308 544.5h24M499 544.5h24M308 545.5h25M498 545.5h25M309 546.5h24M498 546.5h24M309 547.5h25M497 547.5h25M309 548.5h26M496 548.5h26M309 549.5h26M496 549.5h26M309 550.5h27M495 550.5h27M310 551.5h26M495 551.5h26M310 552.5h27M494 552.5h27M310 553.5h28M493 553.5h28M311 554.5h28M492 554.5h28M311 555.5h28M492 555.5h28M311 556.5h29M491 556.5h29M312 557.5h29M490 557.5h29M312 558.5h30M489 558.5h30M312 559.5h30M489 559.5h30M313 560.5h30M488 560.5h30M313 561.5h31M487 561.5h31M313 562.5h32M486 562.5h32M314 563.5h32M485 563.5h32M314 564.5h33M484 564.5h33M314 565.5h34M483 565.5h34M315 566.5h34M482 566.5h34M315 567.5h35M481 567.5h35M316 568.5h35M480 568.5h35M316 569.5h36M479 569.5h36M317 570.5h36M478 570.5h36M317 571.5h38M476 571.5h38M318 572.5h38M475 572.5h38M318 573.5h44M469 573.5h44M319 574.5h50M462 574.5h50M320 575.5h58M453 575.5h58M320 576.5h67M444 576.5h67M321 577.5h76M434 577.5h76M322 578.5h86M423 578.5h86M322 579.5h187M323 580.5h185M324 581.5h183M326 582.5h179M328 583.5h175M330 584.5h171M332 585.5h167M334 586.5h163M335 587.5h161M337 588.5h157M339 589.5h153M341 590.5h149M344 591.5h143M346 592.5h139M348 593.5h135M350 594.5h131M352 595.5h127M354 596.5h123M359 597.5h113M383 598.5h65M410 599.5h11"/><path stroke="#74e6b8" stroke-width="1" d="M408 347.5h15M397 348.5h37M387 349.5h57M378 350.5h75M369 351.5h93M362 352.5h107M356 353.5h119M355 354.5h121M353 355.5h125M352 356.5h127M351 357.5h129M350 358.5h131M349 359.5h133M348 360.5h135M347 361.5h137M346 362.5h139M345 363.5h141M344 364.5h143M343 365.5h145M342 366.5h147M342 367.5h147M341 368.5h149M340 369.5h73M418 369.5h73M339 370.5h68M424 370.5h68M339 371.5h63M429 371.5h63M338 372.5h59M434 372.5h59M337 373.5h55M439 373.5h55M336 374.5h51M444 374.5h51M336 375.5h46M449 375.5h46M335 376.5h43M453 376.5h43M335 377.5h38M458 377.5h38M334 378.5h35M462 378.5h35M333 379.5h32M466 379.5h32M333 380.5h28M470 380.5h28M332 381.5h26M473 381.5h26M332 382.5h24M475 382.5h24M331 383.5h24M476 383.5h24M331 384.5h23M477 384.5h23M330 385.5h23M478 385.5h23M330 386.5h23M478 386.5h23M329 387.5h23M479 387.5h23M329 388.5h22M480 388.5h22M328 389.5h22M481 389.5h22M328 390.5h22M481 390.5h22M328 391.5h21M482 391.5h21M327 392.5h21M483 392.5h21M327 393.5h21M483 393.5h21M326 394.5h21M484 394.5h21M326 395.5h21M484 395.5h21M326 396.5h20M485 396.5h20M325 397.5h20M486 397.5h20M325 398.5h20M486 398.5h20M325 399.5h19M487 399.5h19M324 400.5h20M487 400.5h20M324 401.5h19M488 401.5h19M323 402.5h20M488 402.5h20M323 403.5h19M489 403.5h19M323 404.5h19M489 404.5h19M323 405.5h19M489 405.5h19M323 406.5h18M490 406.5h18M323 407.5h18M490 407.5h18M323 408.5h18M490 408.5h18M322 409.5h19M490 409.5h19M322 410.5h19M490 410.5h19M322 411.5h19M490 411.5h19M322 412.5h18M491 412.5h18M322 413.5h18M491 413.5h18M322 414.5h18M491 414.5h18M322 415.5h18M491 415.5h18M322 416.5h18M491 416.5h18M322 417.5h18M491 417.5h18M322 418.5h17M492 418.5h17M322 419.5h17M492 419.5h17M321 420.5h18M492 420.5h18M321 421.5h18M492 421.5h18M321 422.5h18M492 422.5h18M321 423.5h18M492 423.5h18M321 424.5h18M492 424.5h18M321 425.5h17M493 425.5h17M321 426.5h17M493 426.5h17M321 427.5h17M493 427.5h17M321 428.5h17M493 428.5h17M321 429.5h17M493 429.5h17M321 430.5h17M493 430.5h17M321 431.5h17M493 431.5h17M320 432.5h17M494 432.5h17M320 433.5h17M494 433.5h17M320 434.5h17M494 434.5h17M320 435.5h17M494 435.5h17M320 436.5h17M494 436.5h17M320 437.5h17M494 437.5h17M320 438.5h17M494 438.5h17M320 439.5h16M495 439.5h16M320 440.5h16M495 440.5h16M320 441.5h16M495 441.5h16M320 442.5h16M495 442.5h16M320 443.5h16M495 443.5h16M320 444.5h16M495 444.5h16M319 445.5h17M495 445.5h17M319 446.5h17M495 446.5h17M319 447.5h16M496 447.5h16M319 448.5h16M496 448.5h16M319 449.5h16M496 449.5h16M319 450.5h16M496 450.5h16M319 451.5h16M496 451.5h16M319 452.5h16M496 452.5h16M319 453.5h16M496 453.5h16M319 454.5h16M496 454.5h16M319 455.5h15M497 455.5h15M319 456.5h15M497 456.5h15M319 457.5h15M497 457.5h15M319 458.5h15M497 458.5h15M318 459.5h16M497 459.5h16M318 460.5h16M497 460.5h16M318 461.5h16M497 461.5h16M318 462.5h16M497 462.5h16M318 463.5h16M497 463.5h16M318 464.5h16M497 464.5h16M318 465.5h16M497 465.5h16M318 466.5h16M497 466.5h16M319 467.5h15M497 467.5h15M319 468.5h15M497 468.5h15M319 469.5h15M497 469.5h15M319 470.5h15M497 470.5h15M319 471.5h16M496 471.5h16M319 472.5h16M496 472.5h16M319 473.5h16M496 473.5h16M319 474.5h16M496 474.5h16M319 475.5h16M496 475.5h16M319 476.5h16M496 476.5h16M319 477.5h16M496 477.5h16M319 478.5h16M496 478.5h16M319 479.5h17M495 479.5h17M319 480.5h17M495 480.5h17M320 481.5h16M495 481.5h16M320 482.5h16M495 482.5h16M320 483.5h16M495 483.5h16M320 484.5h16M495 484.5h16M320 485.5h16M495 485.5h16M320 486.5h16M495 486.5h16M320 487.5h17M494 487.5h17M320 488.5h17M494 488.5h17M320 489.5h17M494 489.5h17M320 490.5h17M494 490.5h17M320 491.5h17M494 491.5h17M320 492.5h17M494 492.5h17M320 493.5h17M494 493.5h17M321 494.5h17M493 494.5h17M321 495.5h17M493 495.5h17M321 496.5h17M493 496.5h17M321 497.5h17M493 497.5h17M321 498.5h17M493 498.5h17M321 499.5h17M493 499.5h17M321 500.5h17M493 500.5h17M321 501.5h18M492 501.5h18M321 502.5h18M492 502.5h18M321 503.5h18M492 503.5h18M321 504.5h18M492 504.5h18M321 505.5h18M492 505.5h18M322 506.5h17M492 506.5h17M322 507.5h17M492 507.5h17M322 508.5h18M491 508.5h18M322 509.5h18M491 509.5h18M322 510.5h18M491 510.5h18M322 511.5h18M491 511.5h18M322 512.5h18M491 512.5h18M322 513.5h18M491 513.5h18M322 514.5h19M490 514.5h19M322 515.5h19M490 515.5h19M322 516.5h19M490 516.5h19M323 517.5h18M490 517.5h18M323 518.5h18M490 518.5h18M323 519.5h18M490 519.5h18M323 520.5h19M489 520.5h19M323 521.5h19M489 521.5h19M323 522.5h19M489 522.5h19M323 523.5h20M488 523.5h20M324 524.5h19M488 524.5h19M324 525.5h20M487 525.5h20M325 526.5h19M487 526.5h19M325 527.5h20M486 527.5h20M325 528.5h20M486 528.5h20M326 529.5h20M485 529.5h20M326 530.5h21M484 530.5h21M326 531.5h21M484 531.5h21M327 532.5h21M483 532.5h21M327 533.5h21M483 533.5h21M328 534.5h21M482 534.5h21M328 535.5h22M481 535.5h22M328 536.5h22M481 536.5h22M329 537.5h22M480 537.5h22M329 538.5h23M479 538.5h23M330 539.5h23M478 539.5h23M330 540.5h23M478 540.5h23M331 541.5h23M477 541.5h23M331 542.5h24M476 542.5h24M332 543.5h24M475 543.5h24M332 544.5h26M473 544.5h26M333 545.5h28M470 545.5h28M333 546.5h32M466 546.5h32M334 547.5h35M462 547.5h35M335 548.5h38M458 548.5h38M335 549.5h43M453 549.5h43M336 550.5h46M449 550.5h46M336 551.5h51M444 551.5h51M337 552.5h55M439 552.5h55M338 553.5h59M434 553.5h59M339 554.5h63M429 554.5h63M339 555.5h68M424 555.5h68M340 556.5h73M418 556.5h73M341 557.5h149M342 558.5h147M342 559.5h147M343 560.5h145M344 561.5h143M345 562.5h141M346 563.5h139M347 564.5h137M348 565.5h135M349 566.5h133M350 567.5h131M351 568.5h129M352 569.5h127M353 570.5h125M355 571.5h121M356 572.5h119M362 573.5h107M369 574.5h93M378 575.5h75M387 576.5h57M397 577.5h37M408 578.5h15"/><path stroke="#76eefa" stroke-width="1" d="M413 369.5h5M407 370.5h17M402 371.5h27M397 372.5h37M392 373.5h47M387 374.5h57M382 375.5h67M378 376.5h75M373 377.5h85M369 378.5h93M365 379.5h101M361 380.5h109M358 381.5h115M356 382.5h119M355 383.5h121M354 384.5h123M353 385.5h125M353 386.5h125M352 387.5h127M351 388.5h129M350 389.5h131M350 390.5h131M349 391.5h66M416 391.5h66M348 392.5h63M420 392.5h63M348 393.5h59M424 393.5h59M347 394.5h56M428 394.5h56M347 395.5h53M431 395.5h53M346 396.5h50M435 396.5h50M345 397.5h48M438 397.5h48M345 398.5h45M441 398.5h45M344 399.5h43M444 399.5h43M344 400.5h39M448 400.5h39M343 401.5h37M451 401.5h37M343 402.5h35M453 402.5h35M342 403.5h33M456 403.5h33M342 404.5h31M458 404.5h31M342 405.5h30M459 405.5h30M341 406.5h30M460 406.5h30M341 407.5h29M461 407.5h29M341 408.5h28M462 408.5h28M341 409.5h27M463 409.5h27M341 410.5h26M464 410.5h26M341 411.5h25M465 411.5h25M340 412.5h25M466 412.5h25M340 413.5h24M467 413.5h24M340 414.5h23M468 414.5h23M340 415.5h23M468 415.5h23M340 416.5h22M469 416.5h22M340 417.5h21M470 417.5h21M339 418.5h21M471 418.5h21M339 419.5h20M472 419.5h20M339 420.5h19M473 420.5h19M339 421.5h18M474 421.5h18M339 422.5h18M474 422.5h18M339 423.5h17M475 423.5h17M339 424.5h17M475 424.5h17M338 425.5h18M475 425.5h18M338 426.5h18M475 426.5h18M338 427.5h17M476 427.5h17M338 428.5h17M476 428.5h17M338 429.5h17M476 429.5h17M338 430.5h17M476 430.5h17M338 431.5h17M476 431.5h17M337 432.5h17M477 432.5h17M337 433.5h17M477 433.5h17M337 434.5h17M477 434.5h17M337 435.5h17M477 435.5h17M337 436.5h17M477 436.5h17M337 437.5h16M478 437.5h16M337 438.5h16M478 438.5h16M336 439.5h17M478 439.5h17M336 440.5h17M478 440.5h17M336 441.5h17M478 441.5h17M336 442.5h16M479 442.5h16M336 443.5h16M479 443.5h16M336 444.5h16M479 444.5h16M336 445.5h16M479 445.5h16M336 446.5h16M479 446.5h16M335 447.5h17M479 447.5h17M335 448.5h16M480 448.5h16M335 449.5h16M480 449.5h16M335 450.5h16M480 450.5h16M335 451.5h16M480 451.5h16M335 452.5h16M480 452.5h16M335 453.5h15M481 453.5h15M335 454.5h15M481 454.5h15M334 455.5h16M481 455.5h16M334 456.5h16M481 456.5h16M334 457.5h16M481 457.5h16M334 458.5h16M481 458.5h16M334 459.5h15M482 459.5h15M334 460.5h15M482 460.5h15M334 461.5h15M482 461.5h15M334 462.5h15M482 462.5h15M334 463.5h15M482 463.5h15M334 464.5h15M482 464.5h15M334 465.5h15M482 465.5h15M334 466.5h15M482 466.5h15M334 467.5h16M481 467.5h16M334 468.5h16M481 468.5h16M334 469.5h16M481 469.5h16M334 470.5h16M481 470.5h16M335 471.5h15M481 471.5h15M335 472.5h15M481 472.5h15M335 473.5h16M480 473.5h16M335 474.5h16M480 474.5h16M335 475.5h16M480 475.5h16M335 476.5h16M480 476.5h16M335 477.5h16M480 477.5h16M335 478.5h17M479 478.5h17M336 479.5h16M479 479.5h16M336 480.5h16M479 480.5h16M336 481.5h16M479 481.5h16M336 482.5h16M479 482.5h16M336 483.5h16M479 483.5h16M336 484.5h17M478 484.5h17M336 485.5h17M478 485.5h17M336 486.5h17M478 486.5h17M337 487.5h16M478 487.5h16M337 488.5h16M478 488.5h16M337 489.5h17M477 489.5h17M337 490.5h17M477 490.5h17M337 491.5h17M477 491.5h17M337 492.5h17M477 492.5h17M337 493.5h17M477 493.5h17M338 494.5h17M476 494.5h17M338 495.5h17M476 495.5h17M338 496.5h17M476 496.5h17M338 497.5h17M476 497.5h17M338 498.5h17M476 498.5h17M338 499.5h18M475 499.5h18M338 500.5h18M475 500.5h18M339 501.5h17M475 501.5h17M339 502.5h17M475 502.5h17M339 503.5h18M474 503.5h18M339 504.5h18M474 504.5h18M339 505.5h19M473 505.5h19M339 506.5h20M472 506.5h20M339 507.5h21M471 507.5h21M340 508.5h21M470 508.5h21M340 509.5h22M469 509.5h22M340 510.5h23M468 510.5h23M340 511.5h23M468 511.5h23M340 512.5h24M467 512.5h24M340 513.5h25M466 513.5h25M341 514.5h25M465 514.5h25M341 515.5h26M464 515.5h26M341 516.5h27M463 516.5h27M341 517.5h28M462 517.5h28M341 518.5h29M461 518.5h29M341 519.5h30M460 519.5h30M342 520.5h30M459 520.5h30M342 521.5h31M458 521.5h31M342 522.5h33M456 522.5h33M343 523.5h35M453 523.5h35M343 524.5h37M451 524.5h37M344 525.5h39M448 525.5h39M344 526.5h43M444 526.5h43M345 527.5h45M441 527.5h45M345 528.5h48M438 528.5h48M346 529.5h50M435 529.5h50M347 530.5h53M431 530.5h53M347 531.5h56M428 531.5h56M348 532.5h59M424 532.5h59M348 533.5h63M420 533.5h63M349 534.5h66M416 534.5h66M350 535.5h131M350 536.5h131M351 537.5h129M352 538.5h127M353 539.5h125M353 540.5h125M354 541.5h123M355 542.5h121M356 543.5h119M358 544.5h115M361 545.5h109M365 546.5h101M369 547.5h93M373 548.5h85M378 549.5h75M382 550.5h67M387 551.5h57M392 552.5h47M397 553.5h37M402 554.5h27M407 555.5h17M413 556.5h5"/><path stroke="#78ccfa" stroke-width="1" d="M415 391.5h1M411 392.5h9M407 393.5h17M403 394.5h25M400 395.5h31M396 396.5h39M393 397.5h45M390 398.5h51M387 399.5h57M383 400.5h65M380 401.5h71M378 402.5h75M375 403.5h81M373 404.5h85M372 405.5h87M371 406.5h89M370 407.5h91M369 408.5h93M368 409.5h95M367 410.5h97M366 411.5h99M365 412.5h101M364 413.5h103M363 414.5h105M363 415.5h105M362 416.5h107M361 417.5h109M360 418.5h111M359 419.5h113M358 420.5h115M357 421.5h117M357 422.5h117M356 423.5h119M356 424.5h119M356 425.5h119M356 426.5h119M355 427.5h121M355 428.5h121M355 429.5h121M355 430.5h60M416 430.5h60M355 431.5h59M417 431.5h59M354 432.5h59M418 432.5h59M354 433.5h58M419 433.5h58M354 434.5h57M420 434.5h57M354 435.5h56M421 435.5h56M354 436.5h55M422 436.5h55M353 437.5h55M423 437.5h55M353 438.5h54M424 438.5h54M353 439.5h53M425 439.5h53M353 440.5h52M426 440.5h52M353 441.5h51M427 441.5h51M352 442.5h51M428 442.5h51M352 443.5h50M429 443.5h50M352 444.5h49M430 444.5h49M352 445.5h48M431 445.5h48M352 446.5h47M432 446.5h47M352 447.5h46M433 447.5h46M351 448.5h46M434 448.5h46M351 449.5h46M434 449.5h46M351 450.5h45M435 450.5h45M351 451.5h44M436 451.5h44M351 452.5h43M437 452.5h43M350 453.5h43M438 453.5h43M350 454.5h42M439 454.5h42M350 455.5h41M440 455.5h41M350 456.5h41M440 456.5h41M350 457.5h40M441 457.5h40M350 458.5h39M442 458.5h39M349 459.5h39M443 459.5h39M349 460.5h38M444 460.5h38M349 461.5h37M445 461.5h37M349 462.5h37M445 462.5h37M349 463.5h37M445 463.5h37M349 464.5h37M445 464.5h37M349 465.5h38M444 465.5h38M349 466.5h39M443 466.5h39M350 467.5h39M442 467.5h39M350 468.5h40M441 468.5h40M350 469.5h41M440 469.5h41M350 470.5h41M440 470.5h41M350 471.5h42M439 471.5h42M350 472.5h43M438 472.5h43M351 473.5h43M437 473.5h43M351 474.5h44M436 474.5h44M351 475.5h45M435 475.5h45M351 476.5h46M434 476.5h46M351 477.5h46M434 477.5h46M352 478.5h46M433 478.5h46M352 479.5h47M432 479.5h47M352 480.5h48M431 480.5h48M352 481.5h49M430 481.5h49M352 482.5h50M429 482.5h50M352 483.5h51M428 483.5h51M353 484.5h51M427 484.5h51M353 485.5h52M426 485.5h52M353 486.5h53M425 486.5h53M353 487.5h54M424 487.5h54M353 488.5h55M423 488.5h55M354 489.5h55M422 489.5h55M354 490.5h56M421 490.5h56M354 491.5h57M420 491.5h57M354 492.5h58M419 492.5h58M354 493.5h59M418 493.5h59M355 494.5h59M417 494.5h59M355 495.5h60M416 495.5h60M355 496.5h121M355 497.5h121M355 498.5h121M356 499.5h119M356 500.5h119M356 501.5h119M356 502.5h119M357 503.5h117M357 504.5h117M358 505.5h115M359 506.5h113M360 507.5h111M361 508.5h109M362 509.5h107M363 510.5h105M363 511.5h105M364 512.5h103M365 513.5h101M366 514.5h99M367 515.5h97M368 516.5h95M369 517.5h93M370 518.5h91M371 519.5h89M372 520.5h87M373 521.5h85M375 522.5h81M378 523.5h75M380 524.5h71M383 525.5h65M387 526.5h57M390 527.5h51M393 528.5h45M396 529.5h39M400 530.5h31M403 531.5h25M407 532.5h17M411 533.5h9M415 534.5h1"/><path stroke="#78a6f2" stroke-width="1" d="M415 430.5h1M414 431.5h3M413 432.5h5M412 433.5h7M411 434.5h9M410 435.5h11M409 436.5h13M408 437.5h15M407 438.5h17M406 439.5h19M405 440.5h21M404 441.5h23M403 442.5h25M402 443.5h27M401 444.5h29M400 445.5h31M399 446.5h33M398 447.5h35M397 448.5h37M397 449.5h37M396 450.5h39M395 451.5h41M394 452.5h43M393 453.5h45M392 454.5h47M391 455.5h49M391 456.5h49M390 457.5h51M389 458.5h53M388 459.5h55M387 460.5h57M386 461.5h59M386 462.5h59M386 463.5h59M386 464.5h59M387 465.5h57M388 466.5h55M389 467.5h53M390 468.5h51M391 469.5h49M391 470.5h49M392 471.5h47M393 472.5h45M394 473.5h43M395 474.5h41M396 475.5h39M397 476.5h37M397 477.5h37M398 478.5h35M399 479.5h33M400 480.5h31M401 481.5h29M402 482.5h27M403 483.5h25M404 484.5h23M405 485.5h21M406 486.5h19M407 487.5h17M408 488.5h15M409 489.5h13M410 490.5h11M411 491.5h9M412 492.5h7M413 493.5h5M414 494.5h3M415 495.5h1"/></g><path d="M297.2 286V640M356.3 286V640M415.5 286V640M474.7 286V640M533.8 286V640M238 345.0H593M238 404.0H593M238 463.0H593M238 522.0H593M238 581.0H593" stroke="#0e1220" stroke-width="2.4" fill="none"/><rect x="238" y="286" width="355" height="354" fill="none" stroke="#2a1c72" stroke-width="2.2"/><path d="M238 463H593" stroke="#e040e8" stroke-width="3.2"/><path d="M268.0 314.5v-11M327.2 314.5v-11M386.3 314.5v-11M445.5 314.5v-11M504.7 314.5v-11M563.8 314.5v-11M268.0 373.5v-11M327.2 373.5v-11M386.3 373.5v-11M445.5 373.5v-11M504.7 373.5v-11M563.8 373.5v-11M268.0 432.5v-11M327.2 432.5v-11M386.3 432.5v-11M445.5 432.5v-11M504.7 432.5v-11M563.8 432.5v-11M268.0 491.5v-11M327.2 491.5v-11M386.3 491.5v-11M445.5 491.5v-11M504.7 491.5v-11M563.8 491.5v-11M268.0 550.5v-11M327.2 550.5v-11M386.3 550.5v-11M445.5 550.5v-11M504.7 550.5v-11M563.8 550.5v-11M268.0 609.5v-11M327.2 609.5v-11M386.3 609.5v-11M445.5 609.5v-11M504.7 609.5v-11M563.8 609.5v-11" stroke="#2a9c4a" stroke-width="1.1" fill="none"/><path d="M266.0 306.5L268.0 302.0L270.0 306.5zM325.2 306.5L327.2 302.0L329.2 306.5zM384.3 306.5L386.3 302.0L388.3 306.5zM443.5 306.5L445.5 302.0L447.5 306.5zM502.7 306.5L504.7 302.0L506.7 306.5zM561.8 306.5L563.8 302.0L565.8 306.5zM266.0 365.5L268.0 361.0L270.0 365.5zM325.2 365.5L327.2 361.0L329.2 365.5zM384.3 365.5L386.3 361.0L388.3 365.5zM443.5 365.5L445.5 361.0L447.5 365.5zM502.7 365.5L504.7 361.0L506.7 365.5zM561.8 365.5L563.8 361.0L565.8 365.5zM266.0 424.5L268.0 420.0L270.0 424.5zM325.2 424.5L327.2 420.0L329.2 424.5zM384.3 424.5L386.3 420.0L388.3 424.5zM443.5 424.5L445.5 420.0L447.5 424.5zM502.7 424.5L504.7 420.0L506.7 424.5zM561.8 424.5L563.8 420.0L565.8 424.5zM266.0 483.5L268.0 479.0L270.0 483.5zM325.2 483.5L327.2 479.0L329.2 483.5zM384.3 483.5L386.3 479.0L388.3 483.5zM443.5 483.5L445.5 479.0L447.5 483.5zM502.7 483.5L504.7 479.0L506.7 483.5zM561.8 483.5L563.8 479.0L565.8 483.5zM266.0 542.5L268.0 538.0L270.0 542.5zM325.2 542.5L327.2 538.0L329.2 542.5zM384.3 542.5L386.3 538.0L388.3 542.5zM443.5 542.5L445.5 538.0L447.5 542.5zM502.7 542.5L504.7 538.0L506.7 542.5zM561.8 542.5L563.8 538.0L565.8 542.5zM266.0 601.5L268.0 597.0L270.0 601.5zM325.2 601.5L327.2 597.0L329.2 601.5zM384.3 601.5L386.3 597.0L388.3 601.5zM443.5 601.5L445.5 597.0L447.5 601.5zM502.7 601.5L504.7 597.0L506.7 601.5zM561.8 601.5L563.8 597.0L565.8 601.5z" fill="#2a9c4a"/><path d="M268.0 314.5h11M327.2 314.5h11M386.3 314.5h11M445.5 314.5h11M504.7 314.5h11M563.8 314.5h11M268.0 373.5h11M327.2 373.5h11M386.3 373.5h11M445.5 373.5h11M504.7 373.5h11M563.8 373.5h11M268.0 432.5h11M327.2 432.5h11M386.3 432.5h11M445.5 432.5h11M504.7 432.5h11M563.8 432.5h11M268.0 491.5h11M327.2 491.5h11M386.3 491.5h11M445.5 491.5h11M504.7 491.5h11M563.8 491.5h11M268.0 550.5h11M327.2 550.5h11M386.3 550.5h11M445.5 550.5h11M504.7 550.5h11M563.8 550.5h11M268.0 609.5h11M327.2 609.5h11M386.3 609.5h11M445.5 609.5h11M504.7 609.5h11M563.8 609.5h11" stroke="#a83828" stroke-width="1.1" fill="none"/><path d="M277.0 312.5L281.0 314.5L277.0 316.5zM336.2 312.5L340.2 314.5L336.2 316.5zM395.3 312.5L399.3 314.5L395.3 316.5zM454.5 312.5L458.5 314.5L454.5 316.5zM513.7 312.5L517.7 314.5L513.7 316.5zM572.8 312.5L576.8 314.5L572.8 316.5zM277.0 371.5L281.0 373.5L277.0 375.5zM336.2 371.5L340.2 373.5L336.2 375.5zM395.3 371.5L399.3 373.5L395.3 375.5zM454.5 371.5L458.5 373.5L454.5 375.5zM513.7 371.5L517.7 373.5L513.7 375.5zM572.8 371.5L576.8 373.5L572.8 375.5zM277.0 430.5L281.0 432.5L277.0 434.5zM336.2 430.5L340.2 432.5L336.2 434.5zM395.3 430.5L399.3 432.5L395.3 434.5zM454.5 430.5L458.5 432.5L454.5 434.5zM513.7 430.5L517.7 432.5L513.7 434.5zM572.8 430.5L576.8 432.5L572.8 434.5zM277.0 489.5L281.0 491.5L277.0 493.5zM336.2 489.5L340.2 491.5L336.2 493.5zM395.3 489.5L399.3 491.5L395.3 493.5zM454.5 489.5L458.5 491.5L454.5 493.5zM513.7 489.5L517.7 491.5L513.7 493.5zM572.8 489.5L576.8 491.5L572.8 493.5zM277.0 548.5L281.0 550.5L277.0 552.5zM336.2 548.5L340.2 550.5L336.2 552.5zM395.3 548.5L399.3 550.5L395.3 552.5zM454.5 548.5L458.5 550.5L454.5 552.5zM513.7 548.5L517.7 550.5L513.7 552.5zM572.8 548.5L576.8 550.5L572.8 552.5zM277.0 607.5L281.0 609.5L277.0 611.5zM336.2 607.5L340.2 609.5L336.2 611.5zM395.3 607.5L399.3 609.5L395.3 611.5zM454.5 607.5L458.5 609.5L454.5 611.5zM513.7 607.5L517.7 609.5L513.7 611.5zM572.8 607.5L576.8 609.5L572.8 611.5z" fill="#a83828"/><path d="M231 573L237 560L243 573M306 634L318 640L306 646" stroke="#58c8e8" stroke-width="1.3" fill="none" opacity="0.8"/><path d="M229.5 530L237 540L244.5 530M237 540V549M333 634L349 653M349 634L333 653" stroke="#3cc4e8" stroke-width="2.2" fill="none"/><path d="M589.5 465.5v15l3.5-3.5 2.5 5 2-1-2.5-5h5z" fill="#fff" stroke="#222" stroke-width="1"/>
<rect x="782" y="199.0" width="18" height="35.2" fill="#7474f0"/><rect x="782" y="234.2" width="18" height="35.2" fill="#78a6f2"/><rect x="782" y="269.4" width="18" height="35.2" fill="#78ccfa"/><rect x="782" y="304.6" width="18" height="35.2" fill="#76eefa"/><rect x="782" y="339.8" width="18" height="35.2" fill="#74e6b8"/><rect x="782" y="375.0" width="18" height="35.2" fill="#68de70"/><rect x="782" y="410.2" width="18" height="35.2" fill="#c4ec74"/><rect x="782" y="445.4" width="18" height="35.2" fill="#fff474"/><rect x="782" y="480.6" width="18" height="35.2" fill="#ffe084"/><rect x="782" y="515.8" width="18" height="35.2" fill="#ffcc80"/><rect x="782" y="551.0" width="18" height="35.2" fill="#ffbc7c"/><rect x="782" y="586.2" width="18" height="35.2" fill="#ffa078"/><rect x="782" y="621.4" width="18" height="35.2" fill="#ff8278"/><rect x="782" y="656.6" width="18" height="35.2" fill="#f890c4"/><rect x="782" y="691.8" width="18" height="35.2" fill="#dc90ea"/><path d="M782 234.2h18" stroke="#5757b4" stroke-width="1"/><path d="M782 269.4h18" stroke="#5a7cb5" stroke-width="1"/><path d="M782 304.6h18" stroke="#5a99bb" stroke-width="1"/><path d="M782 339.8h18" stroke="#58b2bb" stroke-width="1"/><path d="M782 375.0h18" stroke="#57ac8a" stroke-width="1"/><path d="M782 410.2h18" stroke="#4ea654" stroke-width="1"/><path d="M782 445.4h18" stroke="#93b157" stroke-width="1"/><path d="M782 480.6h18" stroke="#bfb757" stroke-width="1"/><path d="M782 515.8h18" stroke="#bfa863" stroke-width="1"/><path d="M782 551.0h18" stroke="#bf9960" stroke-width="1"/><path d="M782 586.2h18" stroke="#bf8d5d" stroke-width="1"/><path d="M782 621.4h18" stroke="#bf785a" stroke-width="1"/><path d="M782 656.6h18" stroke="#bf615a" stroke-width="1"/><path d="M782 691.8h18" stroke="#ba6c93" stroke-width="1"/><rect x="782.5" y="199.5" width="17" height="528" fill="none" stroke="#8a6ab8" stroke-width="1"/><text x="780" y="238.2" text-anchor="end" font-size="11" fill="#222">2,8</text><text x="780" y="273.4" text-anchor="end" font-size="11" fill="#222">2,45</text><text x="780" y="308.6" text-anchor="end" font-size="11" fill="#222">2,1</text><text x="780" y="343.8" text-anchor="end" font-size="11" fill="#222">1,75</text><text x="780" y="379.0" text-anchor="end" font-size="11" fill="#222">1,4</text><text x="780" y="414.2" text-anchor="end" font-size="11" fill="#222">1,05</text><text x="780" y="449.4" text-anchor="end" font-size="11" fill="#222">0,7</text><text x="780" y="484.6" text-anchor="end" font-size="11" fill="#222">0,35</text><text x="780" y="519.8" text-anchor="end" font-size="11" fill="#222">0.</text><text x="780" y="555.0" text-anchor="end" font-size="11" fill="#222">-0,35</text><text x="780" y="590.2" text-anchor="end" font-size="11" fill="#222">-0,7</text><text x="780" y="625.4" text-anchor="end" font-size="11" fill="#222">-1,05</text><text x="780" y="660.6" text-anchor="end" font-size="11" fill="#222">-1,4</text><text x="780" y="695.8" text-anchor="end" font-size="11" fill="#222">-1,75</text>
<path d="M984.0 344.0L984.0 354.8L1032.7 339.5L1032.7 328.7M1032.7 328.7L1032.7 335.1L1075.4 321.7L1075.4 315.3M1075.4 315.3L1075.4 320.0L1113.0 308.1L1113.0 303.4M1113.0 303.4L1113.0 307.6L1146.5 297.1L1146.5 292.9M1146.5 292.9L1146.5 297.4L1176.5 288.0L1176.5 283.5M1176.5 283.5L1176.5 289.5L1203.5 281.0L1203.5 275.0M984.0 344.0L984.0 350.1L1006.6 367.8L1006.6 361.7M1006.6 361.7L1006.6 366.5L1032.9 387.2L1032.9 382.4M1032.9 382.4L1032.9 387.1L1064.0 411.6L1064.0 406.9M1064.0 406.9L1064.0 412.5L1101.3 441.8L1101.3 436.2M1101.3 436.2L1101.3 444.4L1146.7 480.2L1146.7 471.9M1146.7 471.9L1146.7 487.2L1203.5 531.8L1203.5 516.5M1203.5 516.5L1203.5 531.8L1260.3 487.3L1260.3 472.0M1260.3 472.0L1260.3 480.3L1305.7 444.6L1305.7 436.4M1305.7 436.4L1305.7 442.0L1343.0 412.8L1343.0 407.2M1343.0 407.2L1343.0 411.9L1374.1 387.5L1374.1 382.8M1374.1 382.8L1374.1 387.6L1400.4 367.0L1400.4 362.2M1400.4 362.2L1400.4 368.3L1423.0 350.6L1423.0 344.5M1203.5 275.0L1203.5 281.0L1230.5 289.5L1230.5 283.5M1230.5 283.5L1230.5 288.0L1260.5 297.5L1260.5 293.0M1260.5 293.0L1260.5 297.2L1294.0 307.8L1294.0 303.6M1294.0 303.6L1294.0 308.3L1331.6 320.3L1331.6 315.6M1331.6 315.6L1331.6 322.0L1374.3 335.5L1374.3 329.1M1374.3 329.1L1374.3 339.9L1423.0 355.3L1423.0 344.5M984.0 344.0L882.0 376.0L944.0 499.0L1021.7 462.0M1423.0 344.5L1382.5 384.0L1349.5 498.4L1386.0 461.0M1203.5 524.0L1066.0 626.0L1109.0 748.0L1203.5 653.0M1203.5 277.0L1157.0 297.0L1162.7 390.5L1203.5 377.0M917.5 444.0L1003.0 408.5M1366.0 443.0L1402.7 408.5M1092.0 699.0L1203.5 593.0M1161.0 342.6L1203.5 325.0" stroke="#b4463c" stroke-width="1" fill="none" opacity="0.85"/><path d="M1203.5 275.0L984.0 344.0M1203.5 275.0L1423.0 344.5M1230.5 283.5L1006.6 361.7M1176.5 283.5L1400.4 362.2M1260.5 293.0L1032.9 382.4M1146.5 292.9L1374.1 382.8M1294.0 303.6L1064.0 406.9M1113.0 303.4L1343.0 407.2M1331.6 315.6L1101.3 436.2M1075.4 315.3L1305.7 436.4M1374.3 329.1L1146.7 471.9M1032.7 328.7L1260.3 472.0" stroke="#7a1414" stroke-width="2.3" fill="none"/><path d="M984.0 344.0L1203.5 516.5L1423.0 344.5M984 344L1021.7 462M1423 344.5L1386 461M1203.5 516.5L1203.5 596M1203.5 292L1203.5 369" stroke="#2a2aa8" stroke-width="2.3" fill="none"/><text x="1021.4" y="335.3" transform="rotate(68 1021.4 335.3)" text-anchor="middle" dominant-baseline="central" font-size="17.5" fill="#cc3a30">-5,02</text><text x="1067.1" y="321.0" transform="rotate(68 1067.1 321.0)" text-anchor="middle" dominant-baseline="central" font-size="17.5" fill="#cc3a30">-3,38</text><text x="1107.2" y="308.4" transform="rotate(68 1107.2 308.4)" text-anchor="middle" dominant-baseline="central" font-size="17.5" fill="#cc3a30">-2,81</text><text x="1142.8" y="297.2" transform="rotate(68 1142.8 297.2)" text-anchor="middle" dominant-baseline="central" font-size="17.5" fill="#cc3a30">-2,81</text><text x="1174.5" y="287.2" transform="rotate(68 1174.5 287.2)" text-anchor="middle" dominant-baseline="central" font-size="17.5" fill="#cc3a30">-3,38</text><text x="1203.0" y="278.2" transform="rotate(68 1203.0 278.2)" text-anchor="middle" dominant-baseline="central" font-size="17.5" fill="#cc3a30">-5,02</text><text x="1008.3" y="351.9" transform="rotate(68 1008.3 351.9)" text-anchor="middle" dominant-baseline="central" font-size="17.5" fill="#cc3a30">-5,02</text><text x="1032.8" y="371.1" transform="rotate(68 1032.8 371.1)" text-anchor="middle" dominant-baseline="central" font-size="17.5" fill="#cc3a30">-3,38</text><text x="1061.5" y="393.7" transform="rotate(68 1061.5 393.7)" text-anchor="middle" dominant-baseline="central" font-size="17.5" fill="#cc3a30">-2,81</text><text x="1095.6" y="420.5" transform="rotate(68 1095.6 420.5)" text-anchor="middle" dominant-baseline="central" font-size="17.5" fill="#cc3a30">-2,81</text><text x="1137.0" y="453.0" transform="rotate(68 1137.0 453.0)" text-anchor="middle" dominant-baseline="central" font-size="17.5" fill="#cc3a30">-3,38</text><text x="1188.1" y="493.2" transform="rotate(68 1188.1 493.2)" text-anchor="middle" dominant-baseline="central" font-size="17.5" fill="#cc3a30">-5,02</text><text x="1218.9" y="494.3" transform="rotate(-72 1218.9 494.3)" text-anchor="middle" dominant-baseline="central" font-size="17.5" fill="#cc3a30">-5,02</text><text x="1270.0" y="454.2" transform="rotate(-72 1270.0 454.2)" text-anchor="middle" dominant-baseline="central" font-size="17.5" fill="#cc3a30">-3,38</text><text x="1311.4" y="421.8" transform="rotate(-72 1311.4 421.8)" text-anchor="middle" dominant-baseline="central" font-size="17.5" fill="#cc3a30">-2,81</text><text x="1345.5" y="395.0" transform="rotate(-72 1345.5 395.0)" text-anchor="middle" dominant-baseline="central" font-size="17.5" fill="#cc3a30">-2,81</text><text x="1374.2" y="372.5" transform="rotate(-72 1374.2 372.5)" text-anchor="middle" dominant-baseline="central" font-size="17.5" fill="#cc3a30">-3,38</text><text x="1398.7" y="353.3" transform="rotate(-72 1398.7 353.3)" text-anchor="middle" dominant-baseline="central" font-size="17.5" fill="#cc3a30">-5,02</text><text x="1204.0" y="279.3" transform="rotate(-72 1204.0 279.3)" text-anchor="middle" dominant-baseline="central" font-size="17.5" fill="#cc3a30">-5,02</text><text x="1232.5" y="288.3" transform="rotate(-72 1232.5 288.3)" text-anchor="middle" dominant-baseline="central" font-size="17.5" fill="#cc3a30">-3,38</text><text x="1264.2" y="298.3" transform="rotate(-72 1264.2 298.3)" text-anchor="middle" dominant-baseline="central" font-size="17.5" fill="#cc3a30">-2,81</text><text x="1299.8" y="309.6" transform="rotate(-72 1299.8 309.6)" text-anchor="middle" dominant-baseline="central" font-size="17.5" fill="#cc3a30">-2,81</text><text x="1339.9" y="322.3" transform="rotate(-72 1339.9 322.3)" text-anchor="middle" dominant-baseline="central" font-size="17.5" fill="#cc3a30">-3,38</text><text x="1385.6" y="336.8" transform="rotate(-72 1385.6 336.8)" text-anchor="middle" dominant-baseline="central" font-size="17.5" fill="#cc3a30">-5,02</text><text x="955" y="412" transform="rotate(-22 955 412)" text-anchor="middle" dominant-baseline="central" font-size="20" fill="#cc3a30">-33,75</text><text x="1373" y="414" transform="rotate(-56 1373 414)" text-anchor="middle" dominant-baseline="central" font-size="19" fill="#cc3a30">-33,75</text><text x="1139.6" y="635.7" transform="rotate(-38 1139.6 635.7)" text-anchor="middle" dominant-baseline="central" font-size="20" fill="#cc3a30">-33,75</text><text x="1180" y="324" transform="rotate(-20 1180 324)" text-anchor="middle" dominant-baseline="central" font-size="14" fill="#cc3a30">-33,75</text><path d="M1003.5 479.7L1044.4 458.4L1048.8 474L1009.3 494.4Z M1015 458.4L1024 476L1039.5 494.4L1031 476ZM1363.5 458.5L1404.4 480L1399 494.4L1359 474Z M1392.4 458.5L1385 476L1368 494.4L1376 476ZM1192.3 371.3V383.5L1215.3 396V383.3Z M1215.3 371.3V383.5L1192.3 396V383.3ZM1181.5 635.7V647.2L1227.6 699.2V687.6Z M1226 635.7V647.2L1180 699.2V687.6Z" stroke="#58c458" stroke-width="1" fill="none"/><path d="M1204 604L1222 617L1203 630L1186 617Z" fill="#c8d4dc" opacity="0.7"/><path d="M1186 617L1203 630L1203 652L1186 634Z" fill="#e4dc50" opacity="0.6"/><path d="M1222 617L1203 630L1203 652L1222 634Z" fill="#48c4e4" opacity="0.6"/><path d="M1203 636L1140.6 585M1154.7 589.6L1140.6 585L1145.3 597M1221 629L1266 585M1252.8 589.6L1266 585L1262.3 598M1203.4 636V595M1198 606.6L1203.4 595L1209.4 606.6" stroke="#3cc8ec" stroke-width="1.5" fill="none"/><text x="1126.6" y="574" text-anchor="middle" dominant-baseline="central" font-size="23" fill="#3cc8ec" stroke="#3cc8ec" stroke-width="1">Y</text><text x="1203" y="578" text-anchor="middle" dominant-baseline="central" font-size="23" fill="#3cc8ec" stroke="#3cc8ec" stroke-width="1">Z</text><text x="1279.6" y="574" text-anchor="middle" dominant-baseline="central" font-size="23" fill="#3cc8ec" stroke="#3cc8ec" stroke-width="1">X</text>
<rect x="0" y="42" width="660" height="23" fill="#f7f7f7"/><rect x="716" y="42" width="205" height="23" fill="#f7f7f7"/><rect x="3" y="44" width="1" height="1.2" fill="#8a8a8a"/><rect x="3" y="47" width="1" height="1.2" fill="#8a8a8a"/><rect x="3" y="50" width="1" height="1.2" fill="#8a8a8a"/><rect x="3" y="53" width="1" height="1.2" fill="#8a8a8a"/><rect x="3" y="56" width="1" height="1.2" fill="#8a8a8a"/><rect x="3" y="59" width="1" height="1.2" fill="#8a8a8a"/><rect x="3" y="62" width="1" height="1.2" fill="#8a8a8a"/><rect x="717" y="44" width="1" height="1.2" fill="#8a8a8a"/><rect x="717" y="47" width="1" height="1.2" fill="#8a8a8a"/><rect x="717" y="50" width="1" height="1.2" fill="#8a8a8a"/><rect x="717" y="53" width="1" height="1.2" fill="#8a8a8a"/><rect x="717" y="56" width="1" height="1.2" fill="#8a8a8a"/><rect x="717" y="59" width="1" height="1.2" fill="#8a8a8a"/><rect x="717" y="62" width="1" height="1.2" fill="#8a8a8a"/><rect x="831" y="44" width="1" height="1.2" fill="#8a8a8a"/><rect x="831" y="47" width="1" height="1.2" fill="#8a8a8a"/><rect x="831" y="50" width="1" height="1.2" fill="#8a8a8a"/><rect x="831" y="53" width="1" height="1.2" fill="#8a8a8a"/><rect x="831" y="56" width="1" height="1.2" fill="#8a8a8a"/><rect x="831" y="59" width="1" height="1.2" fill="#8a8a8a"/><rect x="831" y="62" width="1" height="1.2" fill="#8a8a8a"/><rect x="52" y="45" width="1" height="17" fill="#d0d0d0"/><rect x="96" y="45" width="1" height="17" fill="#d0d0d0"/><rect x="141" y="45" width="1" height="17" fill="#d0d0d0"/><rect x="166" y="45" width="1" height="17" fill="#d0d0d0"/><rect x="191" y="45" width="1" height="17" fill="#d0d0d0"/><rect x="237" y="45" width="1" height="17" fill="#d0d0d0"/><rect x="341" y="45" width="1" height="17" fill="#d0d0d0"/><rect x="386" y="45" width="1" height="17" fill="#d0d0d0"/><rect x="530" y="45" width="1" height="17" fill="#d0d0d0"/><rect x="575" y="45" width="1" height="17" fill="#d0d0d0"/><rect x="621" y="45" width="1" height="17" fill="#d0d0d0"/><rect x="814" y="45" width="1" height="17" fill="#d0d0d0"/><rect x="872" y="45" width="1" height="17" fill="#d0d0d0"/><rect x="906" y="45" width="1" height="17" fill="#d0d0d0"/><path d="M14.5 46.5h7l3.5 3.5v10.5h-10.5z" fill="#e8ecf0" stroke="#6a7078" stroke-width="1"/><path d="M21.5 46.5v3.5h3.5" fill="none" stroke="#6a7078"/><path d="M33 50l6-5 8 9-6 6z" fill="#4a5360"/><path d="M41 60l6-6 0 3-5 4z" fill="#c8ccd4"/><rect x="58" y="46" width="14" height="14" rx="1" fill="#4a5360"/><rect x="61" y="47" width="8" height="4" fill="#e8e8e8"/><rect x="61" y="54" width="8" height="6" fill="#c8ccd4"/><rect x="63" y="56" width="2" height="3" fill="#4a5360"/><rect x="80" y="46" width="9" height="5" fill="#e0e0e0" stroke="#4a5360" stroke-width="1"/><rect x="76" y="51" width="16" height="10" rx="1" fill="#4a5360"/><rect x="79" y="55" width="10" height="4" fill="#c8ccd4"/><path d="M104 52a5 5 0 1 1 4 8" fill="none" stroke="#9aa0a6" stroke-width="2.5"/><path d="M101 49l5 0-2 6z" fill="#9aa0a6"/><path d="M133 52a5 5 0 1 0 -4 8" fill="none" stroke="#9aa0a6" stroke-width="2.5"/><path d="M136 49l-5 0 2 6z" fill="#9aa0a6"/><path d="M147 60l2-5 10-10 3 3-10 10z" fill="#4a5360"/><path d="M147 60l2-5 3 2z" fill="#999"/><rect x="169.5" y="43.5" width="19" height="19" fill="#e4eef8" stroke="#4a6a8a" stroke-width="1"/><path d="M175 52v-3a4 4 0 0 1 8 0v3" fill="none" stroke="#4a5360" stroke-width="1.8"/><rect x="173" y="52" width="12" height="8.5" fill="#4a5360"/><path d="M201 48.5l6.5 4.5-6.5 4.5z" fill="#555c66"/><circle cx="223.5" cy="53" r="6.8" fill="none" stroke="#555c66" stroke-width="1.8" stroke-dasharray="4 2.3"/><path d="M221 49.5l5.5 3.5-5.5 3.5z" fill="#333"/><circle cx="248" cy="52" r="5.2" fill="#f4f4f4" stroke="#3a3f46" stroke-width="1.6"/><path d="M251.5 55.5l4 4.5" stroke="#3a3f46" stroke-width="2.6"/><rect x="245" y="49" width="6" height="6" fill="none" stroke="#3a3f46" stroke-width="1.3"/><circle cx="268" cy="52" r="5.2" fill="#f4f4f4" stroke="#3a3f46" stroke-width="1.6"/><path d="M271.5 55.5l4 4.5" stroke="#3a3f46" stroke-width="2.6"/><circle cx="268" cy="52" r="3" fill="#3a3f46"/><circle cx="288" cy="52" r="5.2" fill="#f4f4f4" stroke="#3a3f46" stroke-width="1.6"/><path d="M291.5 55.5l4 4.5" stroke="#3a3f46" stroke-width="2.6"/><path d="M285 52h6M285 52l3-3M285 52l3 3" stroke="#3a3f46" stroke-width="1.5" fill="none"/><circle cx="308" cy="52" r="5.2" fill="#f4f4f4" stroke="#3a3f46" stroke-width="1.6"/><path d="M311.5 55.5l4 4.5" stroke="#3a3f46" stroke-width="2.6"/><path d="M305 52h6M308 49v6" stroke="#3a3f46" stroke-width="1.4"/><circle cx="328" cy="52" r="5.2" fill="#f4f4f4" stroke="#3a3f46" stroke-width="1.6"/><path d="M331.5 55.5l4 4.5" stroke="#3a3f46" stroke-width="2.6"/><path d="M325 52h6" stroke="#3a3f46" stroke-width="1.6"/><path d="M348 52l3 6h7l2-8v-3l-1 0-1 4v-6h-1.5v5v-6h-1.5v6v-5h-1.5v6l-2-2z" fill="#6a7480" stroke="#3a3f46" stroke-width="0.8"/><ellipse cx="370" cy="49" rx="2" ry="3" fill="#c0c0c0"/><ellipse cx="377" cy="56" rx="2" ry="3" fill="#c0c0c0"/><text x="391" y="57" font-size="11" fill="#444">3-d</text><text x="413" y="57" font-size="12" font-weight="bold" fill="#222">xy</text><text x="432" y="57" font-size="12" font-weight="bold" fill="#222">xz</text><text x="452" y="57" font-size="12" font-weight="bold" fill="#222">yz</text><text x="472" y="57" font-size="12" font-weight="bold" fill="#b0b0b0">nv</text><path d="M496 49a5 5 0 1 1 0 8" fill="none" stroke="#c0c0c0" stroke-width="2.2"/><circle cx="514.5" cy="56" r="3.8" fill="#eee" stroke="#333" stroke-width="1.3"/><circle cx="522.5" cy="56" r="3.8" fill="#eee" stroke="#333" stroke-width="1.3"/><path d="M511 55l4-8M526 55v-9" stroke="#333" stroke-width="1.2" fill="none"/><path d="M542.5 45l7 8h-4v7h-6v-7h-4z" fill="#4e5c70"/><path d="M563 61l7-8h-4v-7h-6v7h-4z" fill="#4e5c70"/><rect x="559" y="45" width="8" height="2" fill="#4e5c70"/><rect x="580" y="46" width="6" height="6" fill="#7a8594"/><rect x="590" y="55" width="6" height="5" fill="#7a8594"/><path d="M591 47l4 4M583 60l4-4" stroke="#4a5360" stroke-width="1.4"/><rect x="601.5" y="46.5" width="13" height="13" fill="#dce6f2" stroke="#5a6a80" stroke-width="1.2"/><path d="M604 53l3 3 5-6" fill="none" stroke="#2a4a6a" stroke-width="1.8"/><rect x="626" y="47" width="13" height="13" fill="#d4d4d4" opacity="0.8"/><path d="M627 59l11-11" stroke="#bbb" stroke-width="2"/><path d="M645 52h6l-3 3z" fill="#222"/><path d="M783 52h6l-3 3z" fill="#222"/><path d="M819 52h6l-3 3z" fill="#222"/><path d="M860 52h6l-3 3z" fill="#222"/><path d="M895 52h6l-3 3z" fill="#222"/><path d="M910 52h6l-3 3z" fill="#222"/><path d="M728 60V49h12v11" fill="none" stroke="#333" stroke-width="1.8"/><path d="M726 60.5h4M738 60.5h4" stroke="#333" stroke-width="1.2"/><path d="M748 60V50h11v10M751 45v5M756 45v5M751 47h5" fill="none" stroke="#4a5360" stroke-width="1.6"/><path d="M768 60V47l6 6 6-6v13" fill="none" stroke="#4a5360" stroke-width="1.8"/><text x="796" y="57" font-size="12" font-weight="bold" fill="#b4b4b4">nd</text><path d="M844 47h9M848.5 47v12M844 59h9" stroke="#333" stroke-width="2"/><rect x="877.5" y="46.5" width="12" height="13" fill="#d0d4e4" stroke="#222" stroke-width="1.4"/>
<rect x="3" y="67" width="1.2" height="1" fill="#8a8a8a"/><rect x="3" y="328" width="1.2" height="1" fill="#8a8a8a"/><rect x="3" y="484" width="1.2" height="1" fill="#8a8a8a"/><rect x="6" y="67" width="1.2" height="1" fill="#8a8a8a"/><rect x="6" y="328" width="1.2" height="1" fill="#8a8a8a"/><rect x="6" y="484" width="1.2" height="1" fill="#8a8a8a"/><rect x="9" y="67" width="1.2" height="1" fill="#8a8a8a"/><rect x="9" y="328" width="1.2" height="1" fill="#8a8a8a"/><rect x="9" y="484" width="1.2" height="1" fill="#8a8a8a"/><rect x="12" y="67" width="1.2" height="1" fill="#8a8a8a"/><rect x="12" y="328" width="1.2" height="1" fill="#8a8a8a"/><rect x="12" y="484" width="1.2" height="1" fill="#8a8a8a"/><rect x="15" y="67" width="1.2" height="1" fill="#8a8a8a"/><rect x="15" y="328" width="1.2" height="1" fill="#8a8a8a"/><rect x="15" y="484" width="1.2" height="1" fill="#8a8a8a"/><rect x="18" y="67" width="1.2" height="1" fill="#8a8a8a"/><rect x="18" y="328" width="1.2" height="1" fill="#8a8a8a"/><rect x="18" y="484" width="1.2" height="1" fill="#8a8a8a"/><rect x="2.5" y="75.5" width="16" height="18" fill="#dce8f4" stroke="#7a90a8" stroke-width="1"/><path d="M7 78v12l3-3 2 4 2-1-2-4h4z" fill="#3a4048"/><path d="M7 100l4 4-1 4 3 3M11 104l3-2" stroke="#a0a0a0" stroke-width="1.5" fill="none"/><rect x="4.5" y="124.5" width="12" height="12" fill="none" stroke="#999" stroke-dasharray="2 1.5"/><rect x="10" y="130" width="1.5" height="1.5" fill="#666"/><path d="M5 148l11 11" stroke="#999" stroke-width="1.2"/><rect x="4.5" y="169.5" width="12" height="13" fill="none" stroke="#999" stroke-dasharray="2 1.5"/><path d="M5 170l11 12" stroke="#888" stroke-width="1.3"/><path d="M5 192l11 13M16 192l-11 13" stroke="#999" stroke-width="1.2"/><rect x="4.5" y="191.5" width="12" height="13" fill="none" stroke="#aaa" stroke-dasharray="2 1.5"/><rect x="4.5" y="213.5" width="12" height="14" fill="none" stroke="#999" stroke-dasharray="2 1.5"/><path d="M5 217h11M5 224h11" stroke="#888"/><path d="M5 236h6l5 6v8H5z" fill="#d0d0d0" stroke="#999"/><rect x="4.5" y="259.5" width="12" height="13" fill="#d4d4d4" stroke="#999"/><rect x="4.5" y="281.5" width="12" height="13" fill="#d8d8d8" stroke="#999" stroke-dasharray="2 1.5"/><rect x="9" y="286" width="3" height="3" fill="#777"/><path d="M11 301h5l-2.5 3z" fill="#222"/><rect x="2.5" y="336.5" width="16" height="18" fill="#dce8f4" stroke="#7a90a8" stroke-width="1"/><path d="M4 346h13M10 338v14" stroke="#3a4048" stroke-width="1"/><circle cx="10" cy="346" r="1.8" fill="#fff" stroke="#3a4048"/><path d="M17 343v6l-3-3z" fill="#3a4048"/><path d="M5 377l10-10" stroke="#3a4048" stroke-width="1"/><circle cx="7" cy="375" r="1.5" fill="#fff" stroke="#3a4048"/><circle cx="11" cy="371" r="1.5" fill="#fff" stroke="#3a4048"/><circle cx="15" cy="367" r="1.5" fill="#fff" stroke="#3a4048"/><path d="M17 364v6l-3-3z" fill="#3a4048"/><path d="M4 384l12 14M16 384l-12 14" stroke="#3a4048" stroke-width="1"/><circle cx="10" cy="391" r="1.6" fill="#fff" stroke="#3a4048"/><path d="M17 388v6l-3-3z" fill="#3a4048"/><path d="M4 413h12M10 406v14" stroke="#3a4048" stroke-width="1"/><circle cx="10" cy="413" r="1.6" fill="#fff" stroke="#3a4048"/><path d="M17 410v6l-3-3z" fill="#3a4048"/><path d="M5 428l10 13" stroke="#3a4048" stroke-width="1"/><circle cx="9" cy="433" r="1.6" fill="#fff" stroke="#3a4048"/><path d="M17 430v6l-3-3z" fill="#3a4048"/><rect x="4" y="451" width="12" height="13" fill="none" stroke="#777" stroke-dasharray="1 1"/><path d="M17 455v6l-3-3z" fill="#333"/><path d="M11 472h5l-2.5 3z" fill="#222"/><text x="3" y="503" font-size="9" fill="#555">all</text><path d="M12 490l6 5-3 1 2 4-1 1-2-4-2 2z" fill="#555"/><text x="3" y="526" font-size="9" fill="#555">PS</text><path d="M12 512l6 5-3 1 2 4-1 1-2-4-2 2z" fill="#555"/><text x="3" y="548" font-size="9" fill="#aaa">clr</text><path d="M12 534l6 5-3 1 2 4-1 1-2-4-2 2z" fill="#bbb"/><path d="M4 556l12 13" stroke="#555" stroke-width="1.5"/><path d="M12 556l6 5-3 1 2 4-1 1-2-4-2 2z" fill="#555"/><path d="M11 577h5l-2.5 3z" fill="#222"/>
<defs><linearGradient id="tabg" x1="0" y1="0" x2="0" y2="1"><stop offset="0" stop-color="#d4e2f2"/><stop offset="1" stop-color="#9dbbe2"/></linearGradient></defs><path d="M35.5 84.5V71.5q0-3 3-3h174q3 0 3 3V84.5" fill="url(#tabg)" stroke="#7c98bc" stroke-width="1"/><text x="62" y="80" font-size="10" fill="#1a2a44" style="white-space:pre">Resultant M11 Diagram   (y1)</text><path d="M779 74.5h7l-3.5 4z" fill="#111"/><path d="M792.5 72.5l7 7M799.5 72.5l-7 7" stroke="#111" stroke-width="1.5"/><path d="M822.5 84.5V71.5q0-3 3-3h166q3 0 3 3V84.5" fill="#f0f0f0" stroke="#8a8a8a" stroke-width="1"/><text x="847" y="80" font-size="10" fill="#222">Axial Force Diagram (DEAD)</text>
<text x="14" y="853" font-size="10" fill="#1a1a1a" textLength="308" lengthAdjust="spacingAndGlyphs">MIN=-1,963, MAX=2,639, Right Click on any Area Element for detailed diagram</text><rect x="1385.5" y="841.5" width="26" height="15" rx="2" fill="#f4f4f4" stroke="#d0d0d0"/><rect x="1414.5" y="841.5" width="26" height="15" rx="2" fill="#f4f4f4" stroke="#d0d0d0"/><path d="M1393 849l5-5v3h6v4h-6v3z" fill="#6a6e72" stroke="#222" stroke-width="0.9"/><path d="M1433 849l-5-5v3h-6v4h6v3z" fill="#6a6e72" stroke="#222" stroke-width="0.9"/><rect x="1442" y="841" width="83" height="16" fill="#fbfbfb"/><rect x="1526" y="841" width="70" height="16" fill="#fbfbfb"/><text x="1445" y="853" font-size="10" fill="#222">GLOBAL</text><text x="1529" y="853" font-size="10" fill="#222">KN, m, C</text><rect x="1596" y="66" width="1" height="792" fill="#8a8a8a"/><path d="M1514 847l3.5 3.5 3.5-3.5M1585 847l3.5 3.5 3.5-3.5" stroke="#555" fill="none"/>
<path d="M19 884a4 4 0 0 1 0-8a6 6 0 0 1 11-2a5 5 0 0 1 5 10z" fill="#bcdcf0"/><text x="43" y="876" font-size="10" fill="#f4f4f4">8°C</text><text x="43" y="889" font-size="10" fill="#e0e0e0">Bulutlu</text><rect x="515" y="868" width="9.3" height="9.3" fill="#3cb4f0"/><rect x="525" y="868" width="9.3" height="9.3" fill="#3cb4f0"/><rect x="515" y="878" width="9.3" height="9.3" fill="#3cb4f0"/><rect x="525" y="878" width="9.3" height="9.3" fill="#3cb4f0"/><circle cx="563" cy="875" r="6" fill="#444" stroke="#ddd" stroke-width="2"/><path d="M559 879l-5 6" stroke="#ddd" stroke-width="2.2"/><rect x="588" y="873" width="13" height="12" fill="#707070"/><rect x="594" y="868" width="14" height="12" fill="#d8d8d8"/><rect x="592" y="876" width="8" height="8" fill="#a0a0a0"/><circle cx="634" cy="877" r="9.5" fill="#6a62c8"/><rect x="628" y="873" width="9" height="8" rx="1.5" fill="#fff"/><path d="M637 877l4-3v7z" fill="#fff"/><path d="M661 870h8l2 2h10v16h-20z" fill="#e8b830"/><rect x="661" y="874" width="20" height="14" fill="#f8d860"/><rect x="666" y="882" width="10" height="6" fill="#2a7ac8"/><circle cx="707" cy="878" r="9.5" fill="#e04030"/><path d="M707 878L697.5 878A9.5 9.5 0 0 0 702 886.5z" fill="#3a9a40"/><path d="M707 878L702 886.5A9.5 9.5 0 0 0 716.5 878z" fill="#f0c020"/><circle cx="707" cy="878" r="4.6" fill="#fff"/><circle cx="707" cy="878" r="3.4" fill="#3a80e8"/><circle cx="715" cy="869" r="4.5" fill="#c8b8a8"/><circle cx="715" cy="870" r="2.5" fill="#3a3028"/><rect x="737" y="867" width="15" height="21" rx="1.5" fill="#9aa0a8"/><rect x="739" y="869" width="11" height="4" fill="#c8d4e0"/><rect x="739" y="875" width="3" height="3" fill="#e0e4e8"/><rect x="743" y="875" width="3" height="3" fill="#e0e4e8"/><rect x="747" y="875" width="3" height="3" fill="#e0e4e8"/><rect x="739" y="879" width="3" height="3" fill="#e0e4e8"/><rect x="743" y="879" width="3" height="3" fill="#e0e4e8"/><rect x="747" y="879" width="3" height="3" fill="#e0e4e8"/><rect x="739" y="883" width="3" height="3" fill="#e0e4e8"/><rect x="743" y="883" width="3" height="3" fill="#e0e4e8"/><rect x="747" y="883" width="3" height="3" fill="#e0e4e8"/><path d="M771 873l10-6 10 6v14h-20z" fill="#1a78d0"/><path d="M771 873l10 7 10-7" fill="#fff" stroke="#fff" stroke-width="1"/><rect x="771" y="880" width="20" height="7" fill="#2a90e8"/><rect x="808" y="868" width="14" height="15" rx="1.5" fill="#f0e8e0"/><rect x="810" y="870" width="3" height="10" fill="#d06050"/><circle cx="821" cy="887" r="2.5" fill="none" stroke="#3a90d0" stroke-width="1.4"/><circle cx="826" cy="881" r="2.5" fill="none" stroke="#3a90d0" stroke-width="1.4"/><rect x="848" y="868" width="16" height="18" rx="1" fill="#1f9a5a"/><rect x="843" y="872" width="11" height="11" rx="1" fill="#106a3a"/><text x="845.5" y="881.5" font-size="9" font-weight="bold" fill="#fff">X</text><rect x="881" y="868" width="18" height="19" fill="#3a0a0a" stroke="#c02020" stroke-width="1.5"/><path d="M884 884c4-8 6-12 6-14c0 4 3 9 7 11c-5-1-9 1-13 3z" fill="none" stroke="#f0f0f0" stroke-width="1.1"/><circle cx="927" cy="877" r="9.5" fill="#1ec050"/><path d="M921 874q6-2 12 1M922 877.5q5-1.5 10 1M923 881q4-1 8 1" stroke="#111" stroke-width="1.5" fill="none"/><ellipse cx="963" cy="877" rx="9.5" ry="10" fill="#e02020"/><ellipse cx="963" cy="877" rx="3.6" ry="7" fill="#1e1e1e"/><path d="M992 880q0-12 11-12q8 0 8 7q0 4-4 4q-3 0-3 4q0 4-4 4q-8 0-8-7z" fill="#2a8ae0"/><circle cx="998" cy="874" r="1.8" fill="#f0c030"/><circle cx="1003" cy="872" r="1.8" fill="#60c040"/><path d="M1006 888l4-10" stroke="#d0b080" stroke-width="2"/><rect x="1021" y="862" width="32" height="34" rx="3" fill="#2e2e2e"/><path d="M1027 867l10 10-10 10M1047 867l-10 10 10 10" stroke="#8a9aa8" stroke-width="2.4" fill="none"/><rect x="1027" y="871" width="13" height="13" fill="#2a6ab8"/><text x="1029.5" y="882" font-size="11" font-weight="bold" fill="#fff">S</text><rect x="1030" y="891" width="14" height="2.5" rx="1" fill="#9aa0a8"/><rect x="1064" y="868" width="19" height="19" rx="5" fill="#2d8cff"/><rect x="1067" y="873.5" width="9" height="8" rx="1.5" fill="#fff"/><path d="M1076 877.5l4-3v7z" fill="#fff"/><rect x="667" y="891" width="6" height="2.5" rx="1" fill="#9a9a9a"/><rect x="704" y="891" width="6" height="2.5" rx="1" fill="#9a9a9a"/><rect x="741" y="891" width="6" height="2.5" rx="1" fill="#9a9a9a"/><rect x="887" y="891" width="6" height="2.5" rx="1" fill="#9a9a9a"/><rect x="1070" y="891" width="6" height="2.5" rx="1" fill="#9a9a9a"/><path d="M1402 880l4-4 4 4" stroke="#eee" stroke-width="1.3" fill="none"/><rect x="1427" y="870" width="5" height="9" rx="2.5" fill="none" stroke="#eee" stroke-width="1.2"/><path d="M1425 876q0 5 4.5 5q4.5 0 4.5-5M1429.5 881v3" stroke="#eee" stroke-width="1.2" fill="none"/><path d="M1448 875q7-6 14 0M1450.5 878q4.5-4 9 0M1453 881q2-2 4 0" stroke="#eee" stroke-width="1.3" fill="none"/><circle cx="1455" cy="883" r="1" fill="#eee"/><path d="M1470 875h3l4-4v13l-4-4h-3z" fill="none" stroke="#eee" stroke-width="1.2"/><path d="M1479 875q2 2.5 0 5M1481 873q4 4.5 0 9" stroke="#eee" stroke-width="1.2" fill="none"/><rect x="1491" y="873" width="10" height="9" fill="#eee"/><rect x="1501" y="876" width="2" height="3" fill="#eee"/><path d="M1490 870v4M1494 870v4" stroke="#eee" stroke-width="1"/><text x="1560" y="875" font-size="10" fill="#f0f0f0" text-anchor="end">20:54</text><text x="1561" y="889" font-size="10" fill="#f0f0f0" text-anchor="end">11.04.2022</text><path d="M1576 870a7 7 0 1 0 5 11a6 6 0 0 1 -5 -11z" fill="none" stroke="#eee" stroke-width="1.2"/>
<defs><clipPath id="camclip"><rect x="1331" y="0" width="266" height="149.5"/></clipPath><filter id="bl" x="-5%" y="-5%" width="110%" height="110%"><feGaussianBlur stdDeviation="0.8"/></filter><linearGradient id="wall" x1="0" x2="1"><stop offset="0" stop-color="#d2cec2"/><stop offset="1" stop-color="#e2ded6"/></linearGradient></defs><g clip-path="url(#camclip)"><rect x="1331" y="0" width="266" height="150" fill="#d4d0c4"/><rect x="1331" y="0" width="14" height="150" fill="#a9a598"/><path d="M1547 0H1597V150H1560L1540 96Z" fill="#0e1626"/><g filter="url(#bl)"><rect x="1331" y="0" width="266" height="150" fill="url(#wall)"/><rect x="1331" y="0" width="10" height="150" fill="#aca89a"/><rect x="1331" y="0" width="14" height="150" fill="#a9a598"/><rect x="1345" y="0" width="60" height="150" fill="#cbc4b0"/><defs><linearGradient id="twd" x1="0" y1="0" x2="0" y2="1"><stop offset="0" stop-color="#b0a894"/><stop offset="0.3" stop-color="#6a6252"/><stop offset="0.6" stop-color="#4a4438"/><stop offset="1" stop-color="#5a5446"/></linearGradient></defs><rect x="1350" y="8" width="13" height="135" fill="url(#twd)"/><rect x="1368" y="0" width="20" height="150" fill="#d6d2c6"/><rect x="1392" y="0" width="11" height="150" fill="#c0baa8"/><path d="M1344 3.0h61M1344 13.8h61M1344 24.6h61M1344 35.4h61M1344 46.2h61M1344 57.0h61M1344 67.8h61M1344 78.6h61M1344 89.4h61M1344 100.2h61M1344 111.0h61M1344 121.8h61M1344 132.6h61M1344 143.4h61" stroke="#ece6d2" stroke-width="1.8"/><path d="M1348 0v150M1363.5 0v150M1367.5 0v150M1388 0v150M1392 0v150M1403 0v150" stroke="#ece6d2" stroke-width="1.8"/><path d="M1547 0H1597V150H1560Q1545 120 1540 96Q1541 70 1543 60Q1549 35 1548 20Q1546 8 1547 0Z" fill="#0e1626"/><path d="M1547 0Q1555 8 1562 0Z" fill="#1a2030"/><rect x="1426" y="87" width="19" height="7" fill="#34302a"/><rect x="1492" y="0" width="20" height="2.5" fill="#50504c"/><path d="M1359 150L1370 128Q1378 112 1392 104Q1415 96 1446 92L1472 104L1504 94Q1520 98 1531 103Q1548 108 1560 116Q1578 130 1588 150Z" fill="#2b5aa4"/><path d="M1488 98Q1500 94 1506 94L1510 99Q1496 104 1486 108Z" fill="#1a2e5a"/><path d="M1488 84L1505 86L1506 96L1488 104Z" fill="#9c7e70"/><path d="M1443 36Q1442 24 1448 20L1499 20Q1504 26 1503 40L1501 64Q1499 80 1488 86L1458 86Q1446 80 1444 64Z" fill="#b39686"/><path d="M1447 20Q1474 28 1500 20L1502 34Q1474 26 1444 36Z" fill="#bea696"/><path d="M1501 44Q1508 42 1508 50Q1508 60 1501 63Z" fill="#a88a7c"/><path d="M1440 50Q1450 46 1460 50L1459 60Q1450 62 1441 59Z" fill="#7c6058" opacity="0.55"/><path d="M1466 48Q1480 43 1496 46L1494 57Q1480 60 1467 57Z" fill="#7c6058" opacity="0.55"/><path d="M1458 56Q1456 66 1457 72Q1462 75 1468 73L1466 58Z" fill="#8e6e62" opacity="0.6"/><path d="M1443 60Q1443 86 1456 100Q1466 110 1476 110Q1492 106 1498 88Q1501 76 1500 60Q1496 70 1490 72Q1482 70 1472 70Q1462 70 1454 74Q1447 70 1443 60Z" fill="#2a221e"/><path d="M1458 80Q1470 77 1484 79L1484 83Q1470 81 1458 84Z" fill="#7a5a50" opacity="0.5"/><path d="M1442 30Q1440 14 1452 8Q1464 3 1474 3Q1490 4 1498 10Q1504 18 1503 36Q1500 28 1497 24Q1474 20 1448 24Q1445 26 1442 30Z" fill="#3a3632"/><path d="M1442 30Q1445 26 1448 24L1450 32Q1446 36 1444 40Z M1503 36Q1500 28 1497 24L1496 32Q1500 36 1502 42Z" fill="#857d74"/><path d="M1434 48Q1446 45 1460 47L1460 62Q1448 65 1437 62Z" fill="none" stroke="#2a2624" stroke-width="1.4"/><path d="M1460 47Q1480 42 1502 41L1499 57Q1480 61 1463 60Z" fill="none" stroke="#2a2624" stroke-width="1.4"/><path d="M1450 150Q1447 140 1452 133Q1458 125 1470 125Q1484 126 1490 138L1492 150Z" fill="#cdb0a2"/><path d="M1458 135Q1468 130 1480 134" stroke="#b89a8e" stroke-width="1.2" fill="none"/></g></g>
</svg>
</body></html>
